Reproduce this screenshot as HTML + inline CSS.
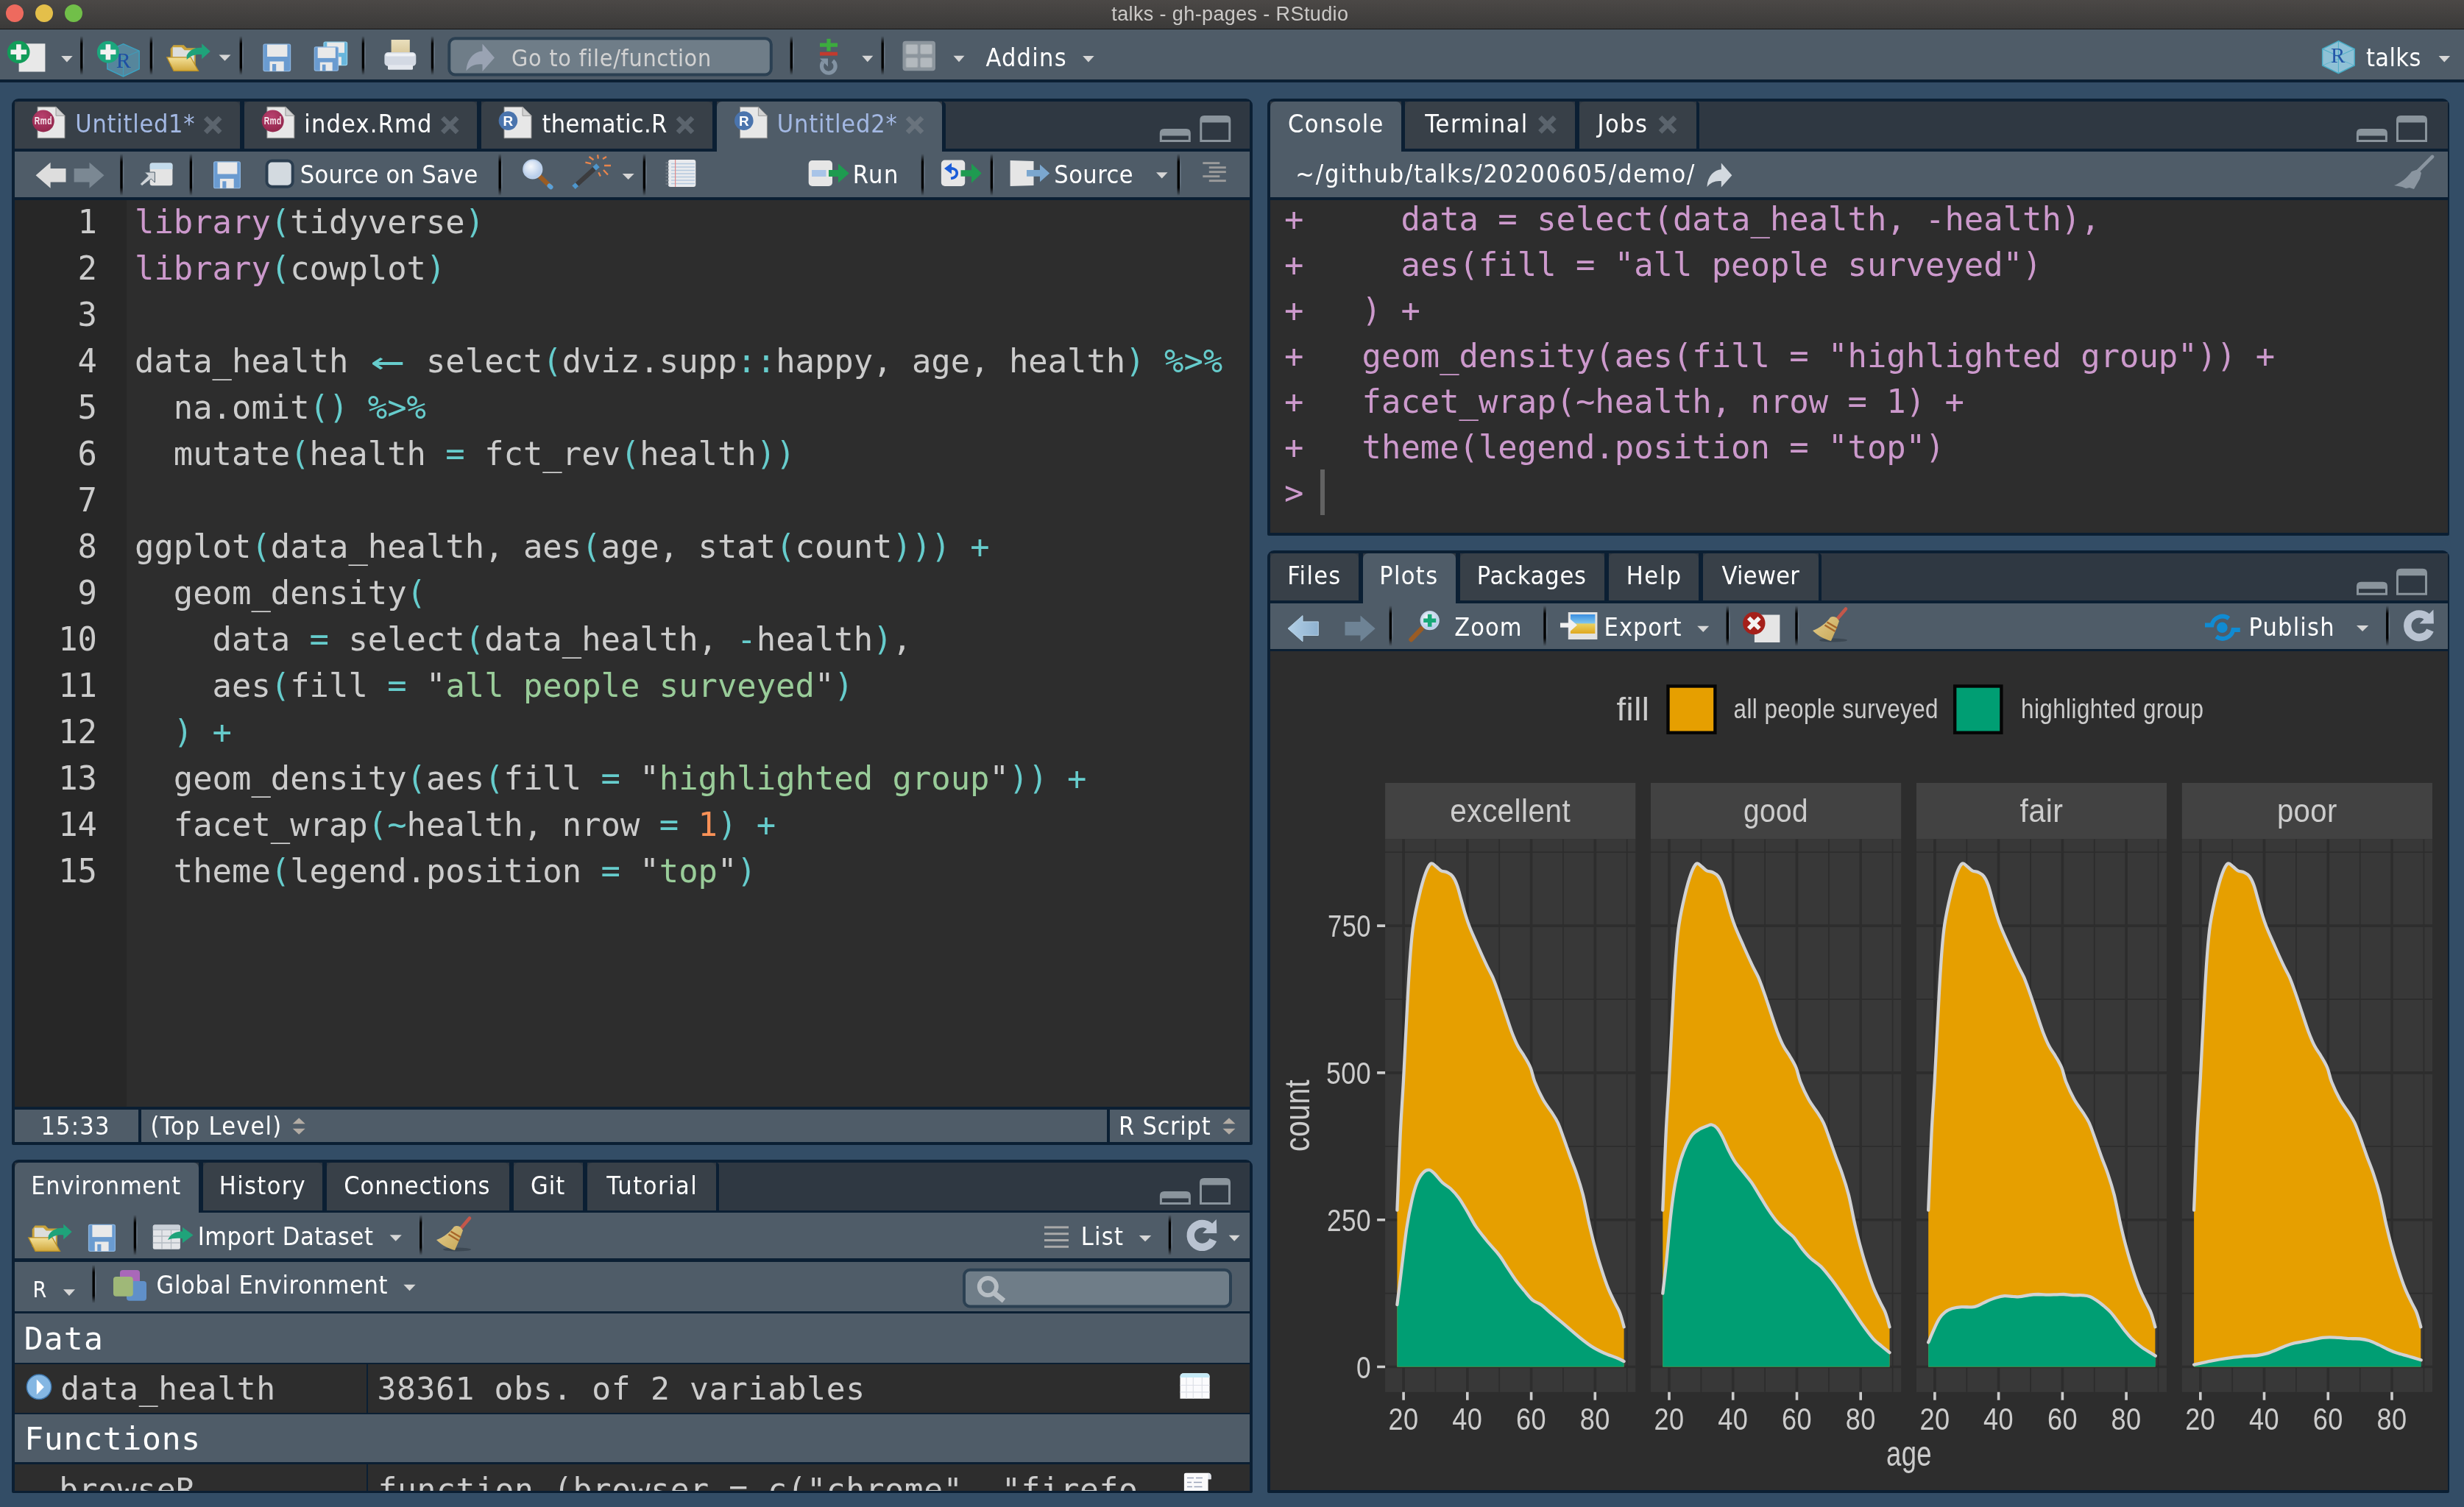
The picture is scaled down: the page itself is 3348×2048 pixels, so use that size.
<!DOCTYPE html>
<html lang="en">
<head>
<meta charset="utf-8">
<title>talks - gh-pages - RStudio</title>
<style>
html,body{margin:0;padding:0;}
body{width:3348px;height:2048px;overflow:hidden;background:#334d66;position:relative;
  font-family:"DejaVu Sans Condensed","Liberation Sans",sans-serif;font-size:34px;letter-spacing:0.5px;color:#fff;}
.a{position:absolute;}
.abs{position:absolute;}
div,span,svg{position:absolute;box-sizing:border-box;}
.code span,.con span,.t span,.ln span{position:static;}
.titlebar{left:0;top:0;width:3348px;height:39px;background:linear-gradient(#4b4846,#3b3a39);}
.titleline{left:0;top:39px;width:3348px;height:1px;background:#151515;}
.title{left:0;top:0;width:3348px;height:39px;line-height:38px;text-align:center;font-family:"Liberation Sans",sans-serif;font-size:26.5px;letter-spacing:0.55px;color:#c9c7c5;}
.tl{top:6px;width:24px;height:24px;border-radius:12px;}
.maintb{left:0;top:40px;width:3348px;height:68px;background:#4f5c68;}
.maintbline{left:0;top:108px;width:3348px;height:4px;background:#0b1f33;}
.pane{background:#0b1f33;border-radius:9px 9px 2px 2px;overflow:hidden;}
.tb{background:#4f5c68;}
.tabrow{background:#2f3842;}
.tab{background:#384048;border-radius:7px 7px 0 0;}
.tab.act{background:#4f5c68;}
.ed{background:#2d2d2d;}
.t{white-space:pre;line-height:40px;height:40px;}
.sep{width:3px;background:linear-gradient(rgba(0,0,0,0),#000 18%,#000 82%,rgba(0,0,0,0));box-shadow:0 0 2px rgba(0,0,0,.35);}
.mono{font-family:"DejaVu Sans Mono","Liberation Mono",monospace;letter-spacing:0;}
.code,.ln,.con{font-family:"DejaVu Sans Mono","Liberation Mono",monospace;font-size:43.85px;letter-spacing:0;white-space:pre;color:#cccccc;}
.code div,.ln div{position:absolute;height:63px;line-height:63px;left:0;}
.ln div{width:100%;text-align:right;}
.con div{position:absolute;height:62px;line-height:62px;left:0;color:#cc99cc;}
.arr{display:inline-block;width:52.8px;text-align:center;transform:scale(1.75,1.15)}
.k{color:#cc99cc}.p{color:#66cccc}.s{color:#99cc99}.n{color:#f99157}
.dd{width:0;height:0;border-left:9px solid transparent;border-right:9px solid transparent;border-top:10px solid #d4d4d4;}
</style>
</head>
<body>
<div id="root" style="left:0;top:0;width:3348px;height:2048px;will-change:transform">
<!-- ===== window title bar ===== -->
<div class="titlebar"></div><div class="titleline"></div>
<div class="tl" style="left:8px;background:#ee6a5e"></div>
<div class="tl" style="left:48px;background:#e4bf4a"></div>
<div class="tl" style="left:88px;background:#71bf49"></div>
<!-- ===== main toolbar ===== -->
<div class="maintb"></div><div class="maintbline"></div>
<!-- ===== source pane ===== -->
<div class="pane" style="left:16px;top:134px;width:1686px;height:1422px;">
  <div class="tabrow" style="left:4px;top:4px;width:1678px;height:64px;"></div>
  <div class="tab" style="left:4px;top:4px;width:306px;height:64px;"></div>
  <div class="tab" style="left:316px;top:4px;width:316px;height:64px;"></div>
  <div class="tab" style="left:638px;top:4px;width:314px;height:64px;"></div>
  <div style="left:310px;top:4px;width:6px;height:64px;background:#0b1f33"></div>
  <div style="left:632px;top:4px;width:6px;height:64px;background:#0b1f33"></div>
  <div style="left:952px;top:4px;width:6px;height:64px;background:#0b1f33"></div>
  <div style="left:1264px;top:4px;width:5px;height:64px;background:#0b1f33;border-radius:0 7px 0 0"></div>
  <!-- toolbar -->
  <div class="tb" style="left:4px;top:72px;width:1678px;height:62px;"></div>
  <div class="tab act" style="left:958px;top:4px;width:306px;height:70px;"></div>
  <!-- editor -->
  <div class="ed" style="left:4px;top:138px;width:1678px;height:1232px;"></div>
  <div style="left:4px;top:138px;width:152px;height:1232px;background:#272727"></div>
  <div class="ln" style="left:4px;top:136.4px;width:112px;height:1000px;">
<div style="top:0px">1</div><div style="top:63px">2</div><div style="top:126px">3</div><div style="top:189px">4</div><div style="top:252px">5</div><div style="top:315px">6</div><div style="top:378px">7</div><div style="top:441px">8</div><div style="top:504px">9</div><div style="top:567px">10</div><div style="top:630px">11</div><div style="top:693px">12</div><div style="top:756px">13</div><div style="top:819px">14</div><div style="top:882px">15</div>
  </div>
  <div class="code" style="left:167px;top:136.4px;width:1500px;height:1000px;">
<div style="top:0px"><span class="k">library</span><span class="p">(</span>tidyverse<span class="p">)</span></div>
<div style="top:63px"><span class="k">library</span><span class="p">(</span>cowplot<span class="p">)</span></div>
<div style="top:189px">data_health <span class="p arr">←</span> select<span class="p">(</span>dviz.supp<span class="p">::</span>happy, age, health<span class="p">)</span> <span class="p">%&gt;%</span></div>
<div style="top:252px">  na.omit<span class="p">()</span> <span class="p">%&gt;%</span></div>
<div style="top:315px">  mutate<span class="p">(</span>health <span class="p">=</span> fct_rev<span class="p">(</span>health<span class="p">))</span></div>
<div style="top:441px">ggplot<span class="p">(</span>data_health, aes<span class="p">(</span>age, stat<span class="p">(</span>count<span class="p">)))</span> <span class="p">+</span></div>
<div style="top:504px">  geom_density<span class="p">(</span></div>
<div style="top:567px">    data <span class="p">=</span> select<span class="p">(</span>data_health, <span class="p">-</span>health<span class="p">)</span>,</div>
<div style="top:630px">    aes<span class="p">(</span>fill <span class="p">=</span> "<span class="s">all people surveyed</span>"<span class="p">)</span></div>
<div style="top:693px">  <span class="p">)</span> <span class="p">+</span></div>
<div style="top:756px">  geom_density<span class="p">(</span>aes<span class="p">(</span>fill <span class="p">=</span> "<span class="s">highlighted group</span>"<span class="p">))</span> <span class="p">+</span></div>
<div style="top:819px">  facet_wrap<span class="p">(~</span>health, nrow <span class="p">=</span> <span class="n">1</span><span class="p">)</span> <span class="p">+</span></div>
<div style="top:882px">  theme<span class="p">(</span>legend.position <span class="p">=</span> "<span class="s">top</span>"<span class="p">)</span></div>
  </div>
  <!-- status bar -->
  <div class="tb" style="left:4px;top:1374px;width:168px;height:44px;"></div>
  <div class="tb" style="left:176px;top:1374px;width:1312px;height:44px;"></div>
  <div class="tb" style="left:1492px;top:1374px;width:190px;height:44px;"></div>
</div>
<!-- ===== console pane ===== -->
<div class="pane" style="left:1722px;top:134px;width:1606px;height:594px;">
  <div class="tabrow" style="left:4px;top:4px;width:1600px;height:64px;"></div>
  <div class="tab" style="left:187px;top:4px;width:231px;height:64px;"></div>
  <div class="tab" style="left:424px;top:4px;width:159px;height:64px;"></div>
  <div style="left:182px;top:4px;width:5px;height:64px;background:#0b1f33"></div>
  <div style="left:418px;top:4px;width:6px;height:64px;background:#0b1f33"></div>
  <div style="left:583px;top:4px;width:4px;height:64px;background:#0b1f33;border-radius:0 7px 0 0"></div>
  <div class="tb" style="left:4px;top:72px;width:1600px;height:62px;"></div>
  <div class="tab act" style="left:4px;top:4px;width:178px;height:70px;"></div>
  <div class="ed" style="left:4px;top:138px;width:1600px;height:452px;"></div>
  <div class="con" style="left:23px;top:132.8px;width:1500px;height:450px;">
<div style="top:0px">+     data = select(data_health, -health),</div>
<div style="top:62px">+     aes(fill = "all people surveyed")</div>
<div style="top:124px">+   ) +</div>
<div style="top:186px">+   geom_density(aes(fill = "highlighted group")) +</div>
<div style="top:248px">+   facet_wrap(~health, nrow = 1) +</div>
<div style="top:310px">+   theme(legend.position = "top")</div>
<div style="top:372px">&gt; </div>
  </div>
  <div style="left:72.2px;top:504px;width:5.4px;height:62px;background:#626262"></div>
</div>
<!-- ===== plots pane ===== -->
<div class="pane" style="left:1722px;top:748px;width:1606px;height:1281px;">
  <div class="tabrow" style="left:4px;top:4px;width:1600px;height:64px;"></div>
  <div class="tab" style="left:4px;top:4px;width:120px;height:64px;"></div>
  <div class="tab" style="left:262px;top:4px;width:196px;height:64px;"></div>
  <div class="tab" style="left:464px;top:4px;width:122px;height:64px;"></div>
  <div class="tab" style="left:592px;top:4px;width:157px;height:64px;"></div>
  <div style="left:124px;top:4px;width:6px;height:64px;background:#0b1f33"></div>
  <div style="left:256px;top:4px;width:6px;height:64px;background:#0b1f33"></div>
  <div style="left:458px;top:4px;width:6px;height:64px;background:#0b1f33"></div>
  <div style="left:586px;top:4px;width:6px;height:64px;background:#0b1f33"></div>
  <div style="left:749px;top:4px;width:4px;height:64px;background:#0b1f33;border-radius:0 7px 0 0"></div>
  <div class="tb" style="left:4px;top:72px;width:1600px;height:61.5px;"></div>
  <div class="tab act" style="left:130px;top:4px;width:126px;height:70px;"></div>
<svg style="left:4px;top:137px" width="1600" height="1140" viewBox="1726 885 1600 1140" font-family="Liberation Sans, sans-serif" fill="#cccccc">
<rect x="1726" y="885" width="1600" height="1140" fill="#2d2d2d"/>
<rect x="1882.1" y="1064.0" width="340.2" height="76.6" fill="#424242"/>
<rect x="1882.1" y="1140.6" width="340.2" height="751.2" fill="#383838"/>
<path d="M1950.4,1140.6V1891.8M2037.2,1140.6V1891.8M2123.9,1140.6V1891.8M2210.7,1140.6V1891.8M1882.1,1757.6H2222.3M1882.1,1557.8H2222.3M1882.1,1358.0H2222.3M1882.1,1158.2H2222.3" stroke="#2d2d2d" stroke-width="1.8" fill="none"/>
<path d="M1907.1,1140.6V1891.8M1993.8,1140.6V1891.8M2080.6,1140.6V1891.8M2167.3,1140.6V1891.8M1882.1,1857.5H2222.3M1882.1,1657.7H2222.3M1882.1,1457.9H2222.3M1882.1,1258.1H2222.3" stroke="#2d2d2d" stroke-width="3.6" fill="none"/>
<path d="M1898.4,1644.7C1899.1,1627.4 1901.3,1570.8 1902.7,1541.3C1904.1,1511.9 1905.3,1498.8 1907.0,1468.1C1908.6,1437.3 1911.1,1385.3 1912.7,1356.8C1914.2,1328.2 1915.1,1313.5 1916.4,1296.8C1917.7,1280.2 1918.4,1270.2 1920.4,1256.9C1922.4,1243.6 1925.6,1228.6 1928.4,1216.9C1931.1,1205.3 1934.3,1194.2 1936.9,1187.0C1939.6,1179.7 1942.0,1175.1 1944.3,1173.6C1946.7,1172.0 1948.9,1175.9 1951.2,1177.6C1953.5,1179.2 1955.8,1181.9 1958.3,1183.3C1960.9,1184.6 1963.8,1184.3 1966.3,1185.5C1968.8,1186.8 1971.2,1187.8 1973.5,1190.7C1975.7,1193.5 1977.7,1197.3 1979.7,1202.7C1981.7,1208.0 1983.5,1215.9 1985.4,1222.6C1987.3,1229.4 1989.2,1237.0 1991.2,1243.2C1993.1,1249.4 1994.0,1252.6 1996.9,1259.7C1999.7,1266.9 2004.5,1277.4 2008.3,1286.0C2012.1,1294.6 2016.4,1304.1 2019.7,1311.1C2023.0,1318.2 2025.4,1321.6 2028.3,1328.2C2031.1,1334.9 2034.0,1343.0 2036.8,1351.1C2039.7,1359.2 2042.5,1368.3 2045.4,1376.8C2048.2,1385.2 2051.1,1394.4 2053.9,1401.9C2056.8,1409.4 2059.6,1416.3 2062.5,1421.8C2065.4,1427.4 2068.2,1430.4 2071.1,1435.3C2073.9,1440.1 2077.2,1445.2 2079.6,1451.0C2082.0,1456.7 2082.5,1462.8 2085.3,1470.0C2088.2,1477.2 2092.9,1487.4 2096.7,1494.3C2100.5,1501.2 2104.8,1506.1 2108.2,1511.4C2111.5,1516.6 2113.9,1519.5 2116.7,1525.7C2119.6,1531.8 2122.4,1540.6 2125.3,1548.5C2128.1,1556.3 2131.0,1564.9 2133.8,1572.7C2136.7,1580.6 2139.6,1587.0 2142.4,1595.6C2145.3,1604.1 2148.1,1612.7 2151.0,1624.1C2153.8,1635.5 2156.7,1651.7 2159.5,1664.1C2162.4,1676.4 2165.2,1687.8 2168.1,1698.3C2170.9,1708.8 2173.8,1718.0 2176.7,1726.8C2179.5,1735.6 2182.4,1744.0 2185.2,1751.1C2188.1,1758.2 2191.2,1764.2 2193.8,1769.7C2196.4,1775.1 2198.8,1778.3 2200.9,1783.9C2203.1,1789.5 2205.7,1800.1 2206.6,1803.3L2206.6,1857.5L1898.4,1857.5Z" fill="#e69f00"/>
<path d="M1898.4,1644.7C1899.1,1627.4 1901.3,1570.8 1902.7,1541.3C1904.1,1511.9 1905.3,1498.8 1907.0,1468.1C1908.6,1437.3 1911.1,1385.3 1912.7,1356.8C1914.2,1328.2 1915.1,1313.5 1916.4,1296.8C1917.7,1280.2 1918.4,1270.2 1920.4,1256.9C1922.4,1243.6 1925.6,1228.6 1928.4,1216.9C1931.1,1205.3 1934.3,1194.2 1936.9,1187.0C1939.6,1179.7 1942.0,1175.1 1944.3,1173.6C1946.7,1172.0 1948.9,1175.9 1951.2,1177.6C1953.5,1179.2 1955.8,1181.9 1958.3,1183.3C1960.9,1184.6 1963.8,1184.3 1966.3,1185.5C1968.8,1186.8 1971.2,1187.8 1973.5,1190.7C1975.7,1193.5 1977.7,1197.3 1979.7,1202.7C1981.7,1208.0 1983.5,1215.9 1985.4,1222.6C1987.3,1229.4 1989.2,1237.0 1991.2,1243.2C1993.1,1249.4 1994.0,1252.6 1996.9,1259.7C1999.7,1266.9 2004.5,1277.4 2008.3,1286.0C2012.1,1294.6 2016.4,1304.1 2019.7,1311.1C2023.0,1318.2 2025.4,1321.6 2028.3,1328.2C2031.1,1334.9 2034.0,1343.0 2036.8,1351.1C2039.7,1359.2 2042.5,1368.3 2045.4,1376.8C2048.2,1385.2 2051.1,1394.4 2053.9,1401.9C2056.8,1409.4 2059.6,1416.3 2062.5,1421.8C2065.4,1427.4 2068.2,1430.4 2071.1,1435.3C2073.9,1440.1 2077.2,1445.2 2079.6,1451.0C2082.0,1456.7 2082.5,1462.8 2085.3,1470.0C2088.2,1477.2 2092.9,1487.4 2096.7,1494.3C2100.5,1501.2 2104.8,1506.1 2108.2,1511.4C2111.5,1516.6 2113.9,1519.5 2116.7,1525.7C2119.6,1531.8 2122.4,1540.6 2125.3,1548.5C2128.1,1556.3 2131.0,1564.9 2133.8,1572.7C2136.7,1580.6 2139.6,1587.0 2142.4,1595.6C2145.3,1604.1 2148.1,1612.7 2151.0,1624.1C2153.8,1635.5 2156.7,1651.7 2159.5,1664.1C2162.4,1676.4 2165.2,1687.8 2168.1,1698.3C2170.9,1708.8 2173.8,1718.0 2176.7,1726.8C2179.5,1735.6 2182.4,1744.0 2185.2,1751.1C2188.1,1758.2 2191.2,1764.2 2193.8,1769.7C2196.4,1775.1 2198.8,1778.3 2200.9,1783.9C2203.1,1789.5 2205.7,1800.1 2206.6,1803.3" fill="none" stroke="#d2d2d2" stroke-width="4.3" stroke-linecap="round" stroke-linejoin="round"/>
<path d="M1898.4,1773.1C1899.4,1765.4 1902.0,1744.1 1904.1,1726.8C1906.2,1709.6 1908.9,1685.7 1911.2,1669.8C1913.6,1653.8 1916.0,1641.7 1918.4,1631.2C1920.8,1620.8 1922.9,1613.3 1925.5,1607.0C1928.1,1600.7 1931.3,1596.1 1934.1,1593.3C1936.8,1590.4 1939.4,1589.5 1942.1,1589.9C1944.7,1590.2 1946.8,1592.7 1949.8,1595.6C1952.7,1598.4 1956.2,1603.7 1959.8,1607.0C1963.3,1610.3 1967.4,1612.0 1971.2,1615.5C1975.0,1619.1 1978.8,1623.2 1982.6,1628.4C1986.4,1633.6 1990.2,1640.5 1994.0,1646.9C1997.8,1653.4 2001.1,1660.5 2005.4,1666.9C2009.7,1673.3 2014.5,1679.0 2019.7,1685.5C2024.9,1691.9 2032.1,1699.3 2036.8,1705.4C2041.6,1711.6 2044.4,1716.9 2048.2,1722.6C2052.0,1728.3 2055.8,1734.5 2059.6,1739.7C2063.4,1744.9 2067.3,1749.4 2071.1,1754.0C2074.9,1758.5 2078.7,1763.6 2082.5,1766.8C2086.3,1770.0 2089.6,1770.0 2093.9,1773.1C2098.2,1776.2 2102.9,1780.9 2108.2,1785.4C2113.4,1789.8 2119.1,1794.4 2125.3,1799.6C2131.5,1804.9 2139.1,1811.8 2145.3,1816.7C2151.4,1821.7 2156.7,1825.9 2162.4,1829.6C2168.1,1833.3 2173.8,1836.1 2179.5,1838.7C2185.2,1841.3 2192.1,1843.4 2196.6,1845.3C2201.1,1847.2 2205.0,1849.3 2206.6,1850.1L2206.6,1857.5L1898.4,1857.5Z" fill="#009e73"/>
<path d="M1898.4,1773.1C1899.4,1765.4 1902.0,1744.1 1904.1,1726.8C1906.2,1709.6 1908.9,1685.7 1911.2,1669.8C1913.6,1653.8 1916.0,1641.7 1918.4,1631.2C1920.8,1620.8 1922.9,1613.3 1925.5,1607.0C1928.1,1600.7 1931.3,1596.1 1934.1,1593.3C1936.8,1590.4 1939.4,1589.5 1942.1,1589.9C1944.7,1590.2 1946.8,1592.7 1949.8,1595.6C1952.7,1598.4 1956.2,1603.7 1959.8,1607.0C1963.3,1610.3 1967.4,1612.0 1971.2,1615.5C1975.0,1619.1 1978.8,1623.2 1982.6,1628.4C1986.4,1633.6 1990.2,1640.5 1994.0,1646.9C1997.8,1653.4 2001.1,1660.5 2005.4,1666.9C2009.7,1673.3 2014.5,1679.0 2019.7,1685.5C2024.9,1691.9 2032.1,1699.3 2036.8,1705.4C2041.6,1711.6 2044.4,1716.9 2048.2,1722.6C2052.0,1728.3 2055.8,1734.5 2059.6,1739.7C2063.4,1744.9 2067.3,1749.4 2071.1,1754.0C2074.9,1758.5 2078.7,1763.6 2082.5,1766.8C2086.3,1770.0 2089.6,1770.0 2093.9,1773.1C2098.2,1776.2 2102.9,1780.9 2108.2,1785.4C2113.4,1789.8 2119.1,1794.4 2125.3,1799.6C2131.5,1804.9 2139.1,1811.8 2145.3,1816.7C2151.4,1821.7 2156.7,1825.9 2162.4,1829.6C2168.1,1833.3 2173.8,1836.1 2179.5,1838.7C2185.2,1841.3 2192.1,1843.4 2196.6,1845.3C2201.1,1847.2 2205.0,1849.3 2206.6,1850.1" fill="none" stroke="#d2d2d2" stroke-width="4.3" stroke-linecap="round" stroke-linejoin="round"/>
<text x="2052.2" y="1117.3" font-size="44" text-anchor="middle" textLength="164" lengthAdjust="spacingAndGlyphs">excellent</text>
<text x="1907.1" y="1943" font-size="43" text-anchor="middle" textLength="41" lengthAdjust="spacingAndGlyphs">20</text>
<text x="1993.8" y="1943" font-size="43" text-anchor="middle" textLength="41" lengthAdjust="spacingAndGlyphs">40</text>
<text x="2080.6" y="1943" font-size="43" text-anchor="middle" textLength="41" lengthAdjust="spacingAndGlyphs">60</text>
<text x="2167.3" y="1943" font-size="43" text-anchor="middle" textLength="41" lengthAdjust="spacingAndGlyphs">80</text>
<path d="M1907.1,1891.8V1902.8M1993.8,1891.8V1902.8M2080.6,1891.8V1902.8M2167.3,1891.8V1902.8" stroke="#cccccc" stroke-width="3.6" fill="none"/>
<rect x="2243.0" y="1064.0" width="340.2" height="76.6" fill="#424242"/>
<rect x="2243.0" y="1140.6" width="340.2" height="751.2" fill="#383838"/>
<path d="M2311.4,1140.6V1891.8M2398.1,1140.6V1891.8M2484.9,1140.6V1891.8M2571.6,1140.6V1891.8M2243.0,1757.6H2583.2M2243.0,1557.8H2583.2M2243.0,1358.0H2583.2M2243.0,1158.2H2583.2" stroke="#2d2d2d" stroke-width="1.8" fill="none"/>
<path d="M2268.0,1140.6V1891.8M2354.7,1140.6V1891.8M2441.5,1140.6V1891.8M2528.2,1140.6V1891.8M2243.0,1857.5H2583.2M2243.0,1657.7H2583.2M2243.0,1457.9H2583.2M2243.0,1258.1H2583.2" stroke="#2d2d2d" stroke-width="3.6" fill="none"/>
<path d="M2259.3,1644.7C2260.0,1627.4 2262.2,1570.8 2263.6,1541.3C2265.0,1511.9 2266.2,1498.8 2267.9,1468.1C2269.5,1437.3 2272.0,1385.3 2273.6,1356.8C2275.1,1328.2 2276.0,1313.5 2277.3,1296.8C2278.6,1280.2 2279.3,1270.2 2281.3,1256.9C2283.3,1243.6 2286.5,1228.6 2289.3,1216.9C2292.0,1205.3 2295.2,1194.2 2297.8,1187.0C2300.5,1179.7 2302.9,1175.1 2305.2,1173.6C2307.6,1172.0 2309.8,1175.9 2312.1,1177.6C2314.4,1179.2 2316.7,1181.9 2319.2,1183.3C2321.8,1184.6 2324.7,1184.3 2327.2,1185.5C2329.7,1186.8 2332.1,1187.8 2334.4,1190.7C2336.6,1193.5 2338.6,1197.3 2340.6,1202.7C2342.6,1208.0 2344.4,1215.9 2346.3,1222.6C2348.2,1229.4 2350.1,1237.0 2352.1,1243.2C2354.0,1249.4 2354.9,1252.6 2357.8,1259.7C2360.6,1266.9 2365.4,1277.4 2369.2,1286.0C2373.0,1294.6 2377.3,1304.1 2380.6,1311.1C2383.9,1318.2 2386.3,1321.6 2389.2,1328.2C2392.0,1334.9 2394.9,1343.0 2397.7,1351.1C2400.6,1359.2 2403.4,1368.3 2406.3,1376.8C2409.1,1385.2 2412.0,1394.4 2414.8,1401.9C2417.7,1409.4 2420.5,1416.3 2423.4,1421.8C2426.3,1427.4 2429.1,1430.4 2432.0,1435.3C2434.8,1440.1 2438.1,1445.2 2440.5,1451.0C2442.9,1456.7 2443.4,1462.8 2446.2,1470.0C2449.1,1477.2 2453.8,1487.4 2457.6,1494.3C2461.4,1501.2 2465.7,1506.1 2469.1,1511.4C2472.4,1516.6 2474.8,1519.5 2477.6,1525.7C2480.5,1531.8 2483.3,1540.6 2486.2,1548.5C2489.0,1556.3 2491.9,1564.9 2494.7,1572.7C2497.6,1580.6 2500.5,1587.0 2503.3,1595.6C2506.2,1604.1 2509.0,1612.7 2511.9,1624.1C2514.7,1635.5 2517.6,1651.7 2520.4,1664.1C2523.3,1676.4 2526.1,1687.8 2529.0,1698.3C2531.8,1708.8 2534.7,1718.0 2537.6,1726.8C2540.4,1735.6 2543.3,1744.0 2546.1,1751.1C2549.0,1758.2 2552.1,1764.2 2554.7,1769.7C2557.3,1775.1 2559.7,1778.3 2561.8,1783.9C2564.0,1789.5 2566.6,1800.1 2567.5,1803.3L2567.5,1857.5L2259.3,1857.5Z" fill="#e69f00"/>
<path d="M2259.3,1644.7C2260.0,1627.4 2262.2,1570.8 2263.6,1541.3C2265.0,1511.9 2266.2,1498.8 2267.9,1468.1C2269.5,1437.3 2272.0,1385.3 2273.6,1356.8C2275.1,1328.2 2276.0,1313.5 2277.3,1296.8C2278.6,1280.2 2279.3,1270.2 2281.3,1256.9C2283.3,1243.6 2286.5,1228.6 2289.3,1216.9C2292.0,1205.3 2295.2,1194.2 2297.8,1187.0C2300.5,1179.7 2302.9,1175.1 2305.2,1173.6C2307.6,1172.0 2309.8,1175.9 2312.1,1177.6C2314.4,1179.2 2316.7,1181.9 2319.2,1183.3C2321.8,1184.6 2324.7,1184.3 2327.2,1185.5C2329.7,1186.8 2332.1,1187.8 2334.4,1190.7C2336.6,1193.5 2338.6,1197.3 2340.6,1202.7C2342.6,1208.0 2344.4,1215.9 2346.3,1222.6C2348.2,1229.4 2350.1,1237.0 2352.1,1243.2C2354.0,1249.4 2354.9,1252.6 2357.8,1259.7C2360.6,1266.9 2365.4,1277.4 2369.2,1286.0C2373.0,1294.6 2377.3,1304.1 2380.6,1311.1C2383.9,1318.2 2386.3,1321.6 2389.2,1328.2C2392.0,1334.9 2394.9,1343.0 2397.7,1351.1C2400.6,1359.2 2403.4,1368.3 2406.3,1376.8C2409.1,1385.2 2412.0,1394.4 2414.8,1401.9C2417.7,1409.4 2420.5,1416.3 2423.4,1421.8C2426.3,1427.4 2429.1,1430.4 2432.0,1435.3C2434.8,1440.1 2438.1,1445.2 2440.5,1451.0C2442.9,1456.7 2443.4,1462.8 2446.2,1470.0C2449.1,1477.2 2453.8,1487.4 2457.6,1494.3C2461.4,1501.2 2465.7,1506.1 2469.1,1511.4C2472.4,1516.6 2474.8,1519.5 2477.6,1525.7C2480.5,1531.8 2483.3,1540.6 2486.2,1548.5C2489.0,1556.3 2491.9,1564.9 2494.7,1572.7C2497.6,1580.6 2500.5,1587.0 2503.3,1595.6C2506.2,1604.1 2509.0,1612.7 2511.9,1624.1C2514.7,1635.5 2517.6,1651.7 2520.4,1664.1C2523.3,1676.4 2526.1,1687.8 2529.0,1698.3C2531.8,1708.8 2534.7,1718.0 2537.6,1726.8C2540.4,1735.6 2543.3,1744.0 2546.1,1751.1C2549.0,1758.2 2552.1,1764.2 2554.7,1769.7C2557.3,1775.1 2559.7,1778.3 2561.8,1783.9C2564.0,1789.5 2566.6,1800.1 2567.5,1803.3" fill="none" stroke="#d2d2d2" stroke-width="4.3" stroke-linecap="round" stroke-linejoin="round"/>
<path d="M2259.3,1757.7C2260.2,1750.2 2262.6,1730.1 2264.4,1712.6C2266.2,1695.1 2268.2,1669.8 2270.1,1652.6C2272.0,1635.5 2273.7,1622.2 2275.9,1609.8C2278.0,1597.5 2280.4,1587.5 2283.0,1578.4C2285.6,1569.4 2288.7,1561.8 2291.5,1555.6C2294.4,1549.4 2297.0,1544.9 2300.1,1541.3C2303.2,1537.8 2306.8,1536.1 2310.1,1534.2C2313.4,1532.3 2317.5,1530.9 2320.1,1529.9C2322.7,1529.0 2323.7,1528.0 2325.8,1528.5C2327.9,1529.0 2330.6,1530.2 2332.9,1532.8C2335.3,1535.4 2337.4,1539.2 2340.1,1544.2C2342.7,1549.2 2345.8,1557.0 2348.6,1562.8C2351.5,1568.5 2353.9,1573.5 2357.2,1578.4C2360.5,1583.4 2364.8,1588.0 2368.6,1592.7C2372.4,1597.5 2376.2,1601.5 2380.0,1607.0C2383.8,1612.5 2387.6,1619.4 2391.4,1625.5C2395.2,1631.7 2399.0,1638.4 2402.9,1644.1C2406.7,1649.8 2410.5,1655.3 2414.3,1659.8C2418.1,1664.3 2421.9,1667.6 2425.7,1671.2C2429.5,1674.8 2433.3,1676.9 2437.1,1681.2C2440.9,1685.5 2444.7,1692.1 2448.5,1696.9C2452.3,1701.6 2455.6,1705.7 2459.9,1709.7C2464.2,1713.8 2469.4,1716.4 2474.2,1721.1C2479.0,1725.9 2483.7,1732.1 2488.5,1738.3C2493.2,1744.4 2498.0,1751.3 2502.7,1758.2C2507.5,1765.1 2512.2,1772.5 2517.0,1779.6C2521.8,1786.8 2526.5,1794.4 2531.3,1801.1C2536.0,1807.7 2541.3,1814.8 2545.5,1819.6C2549.8,1824.4 2553.3,1826.5 2557.0,1829.6C2560.6,1832.7 2565.8,1836.7 2567.5,1838.2L2567.5,1857.5L2259.3,1857.5Z" fill="#009e73"/>
<path d="M2259.3,1757.7C2260.2,1750.2 2262.6,1730.1 2264.4,1712.6C2266.2,1695.1 2268.2,1669.8 2270.1,1652.6C2272.0,1635.5 2273.7,1622.2 2275.9,1609.8C2278.0,1597.5 2280.4,1587.5 2283.0,1578.4C2285.6,1569.4 2288.7,1561.8 2291.5,1555.6C2294.4,1549.4 2297.0,1544.9 2300.1,1541.3C2303.2,1537.8 2306.8,1536.1 2310.1,1534.2C2313.4,1532.3 2317.5,1530.9 2320.1,1529.9C2322.7,1529.0 2323.7,1528.0 2325.8,1528.5C2327.9,1529.0 2330.6,1530.2 2332.9,1532.8C2335.3,1535.4 2337.4,1539.2 2340.1,1544.2C2342.7,1549.2 2345.8,1557.0 2348.6,1562.8C2351.5,1568.5 2353.9,1573.5 2357.2,1578.4C2360.5,1583.4 2364.8,1588.0 2368.6,1592.7C2372.4,1597.5 2376.2,1601.5 2380.0,1607.0C2383.8,1612.5 2387.6,1619.4 2391.4,1625.5C2395.2,1631.7 2399.0,1638.4 2402.9,1644.1C2406.7,1649.8 2410.5,1655.3 2414.3,1659.8C2418.1,1664.3 2421.9,1667.6 2425.7,1671.2C2429.5,1674.8 2433.3,1676.9 2437.1,1681.2C2440.9,1685.5 2444.7,1692.1 2448.5,1696.9C2452.3,1701.6 2455.6,1705.7 2459.9,1709.7C2464.2,1713.8 2469.4,1716.4 2474.2,1721.1C2479.0,1725.9 2483.7,1732.1 2488.5,1738.3C2493.2,1744.4 2498.0,1751.3 2502.7,1758.2C2507.5,1765.1 2512.2,1772.5 2517.0,1779.6C2521.8,1786.8 2526.5,1794.4 2531.3,1801.1C2536.0,1807.7 2541.3,1814.8 2545.5,1819.6C2549.8,1824.4 2553.3,1826.5 2557.0,1829.6C2560.6,1832.7 2565.8,1836.7 2567.5,1838.2" fill="none" stroke="#d2d2d2" stroke-width="4.3" stroke-linecap="round" stroke-linejoin="round"/>
<text x="2413.1" y="1117.3" font-size="44" text-anchor="middle" textLength="88" lengthAdjust="spacingAndGlyphs">good</text>
<text x="2268.0" y="1943" font-size="43" text-anchor="middle" textLength="41" lengthAdjust="spacingAndGlyphs">20</text>
<text x="2354.7" y="1943" font-size="43" text-anchor="middle" textLength="41" lengthAdjust="spacingAndGlyphs">40</text>
<text x="2441.5" y="1943" font-size="43" text-anchor="middle" textLength="41" lengthAdjust="spacingAndGlyphs">60</text>
<text x="2528.2" y="1943" font-size="43" text-anchor="middle" textLength="41" lengthAdjust="spacingAndGlyphs">80</text>
<path d="M2268.0,1891.8V1902.8M2354.7,1891.8V1902.8M2441.5,1891.8V1902.8M2528.2,1891.8V1902.8" stroke="#cccccc" stroke-width="3.6" fill="none"/>
<rect x="2603.9" y="1064.0" width="340.2" height="76.6" fill="#424242"/>
<rect x="2603.9" y="1140.6" width="340.2" height="751.2" fill="#383838"/>
<path d="M2672.3,1140.6V1891.8M2759.0,1140.6V1891.8M2845.8,1140.6V1891.8M2932.5,1140.6V1891.8M2603.9,1757.6H2944.1M2603.9,1557.8H2944.1M2603.9,1358.0H2944.1M2603.9,1158.2H2944.1" stroke="#2d2d2d" stroke-width="1.8" fill="none"/>
<path d="M2628.9,1140.6V1891.8M2715.6,1140.6V1891.8M2802.4,1140.6V1891.8M2889.1,1140.6V1891.8M2603.9,1857.5H2944.1M2603.9,1657.7H2944.1M2603.9,1457.9H2944.1M2603.9,1258.1H2944.1" stroke="#2d2d2d" stroke-width="3.6" fill="none"/>
<path d="M2620.2,1644.7C2620.9,1627.4 2623.1,1570.8 2624.5,1541.3C2625.9,1511.9 2627.1,1498.8 2628.8,1468.1C2630.4,1437.3 2632.9,1385.3 2634.5,1356.8C2636.0,1328.2 2636.9,1313.5 2638.2,1296.8C2639.5,1280.2 2640.2,1270.2 2642.2,1256.9C2644.2,1243.6 2647.4,1228.6 2650.2,1216.9C2652.9,1205.3 2656.1,1194.2 2658.7,1187.0C2661.4,1179.7 2663.8,1175.1 2666.1,1173.6C2668.5,1172.0 2670.7,1175.9 2673.0,1177.6C2675.3,1179.2 2677.6,1181.9 2680.1,1183.3C2682.7,1184.6 2685.6,1184.3 2688.1,1185.5C2690.6,1186.8 2693.0,1187.8 2695.3,1190.7C2697.5,1193.5 2699.5,1197.3 2701.5,1202.7C2703.5,1208.0 2705.3,1215.9 2707.2,1222.6C2709.1,1229.4 2711.0,1237.0 2713.0,1243.2C2714.9,1249.4 2715.8,1252.6 2718.7,1259.7C2721.5,1266.9 2726.3,1277.4 2730.1,1286.0C2733.9,1294.6 2738.2,1304.1 2741.5,1311.1C2744.8,1318.2 2747.2,1321.6 2750.1,1328.2C2752.9,1334.9 2755.8,1343.0 2758.6,1351.1C2761.5,1359.2 2764.3,1368.3 2767.2,1376.8C2770.0,1385.2 2772.9,1394.4 2775.7,1401.9C2778.6,1409.4 2781.4,1416.3 2784.3,1421.8C2787.2,1427.4 2790.0,1430.4 2792.9,1435.3C2795.7,1440.1 2799.0,1445.2 2801.4,1451.0C2803.8,1456.7 2804.3,1462.8 2807.1,1470.0C2810.0,1477.2 2814.7,1487.4 2818.5,1494.3C2822.3,1501.2 2826.6,1506.1 2830.0,1511.4C2833.3,1516.6 2835.7,1519.5 2838.5,1525.7C2841.4,1531.8 2844.2,1540.6 2847.1,1548.5C2849.9,1556.3 2852.8,1564.9 2855.6,1572.7C2858.5,1580.6 2861.4,1587.0 2864.2,1595.6C2867.1,1604.1 2869.9,1612.7 2872.8,1624.1C2875.6,1635.5 2878.5,1651.7 2881.3,1664.1C2884.2,1676.4 2887.0,1687.8 2889.9,1698.3C2892.7,1708.8 2895.6,1718.0 2898.5,1726.8C2901.3,1735.6 2904.2,1744.0 2907.0,1751.1C2909.9,1758.2 2913.0,1764.2 2915.6,1769.7C2918.2,1775.1 2920.6,1778.3 2922.7,1783.9C2924.9,1789.5 2927.5,1800.1 2928.4,1803.3L2928.4,1857.5L2620.2,1857.5Z" fill="#e69f00"/>
<path d="M2620.2,1644.7C2620.9,1627.4 2623.1,1570.8 2624.5,1541.3C2625.9,1511.9 2627.1,1498.8 2628.8,1468.1C2630.4,1437.3 2632.9,1385.3 2634.5,1356.8C2636.0,1328.2 2636.9,1313.5 2638.2,1296.8C2639.5,1280.2 2640.2,1270.2 2642.2,1256.9C2644.2,1243.6 2647.4,1228.6 2650.2,1216.9C2652.9,1205.3 2656.1,1194.2 2658.7,1187.0C2661.4,1179.7 2663.8,1175.1 2666.1,1173.6C2668.5,1172.0 2670.7,1175.9 2673.0,1177.6C2675.3,1179.2 2677.6,1181.9 2680.1,1183.3C2682.7,1184.6 2685.6,1184.3 2688.1,1185.5C2690.6,1186.8 2693.0,1187.8 2695.3,1190.7C2697.5,1193.5 2699.5,1197.3 2701.5,1202.7C2703.5,1208.0 2705.3,1215.9 2707.2,1222.6C2709.1,1229.4 2711.0,1237.0 2713.0,1243.2C2714.9,1249.4 2715.8,1252.6 2718.7,1259.7C2721.5,1266.9 2726.3,1277.4 2730.1,1286.0C2733.9,1294.6 2738.2,1304.1 2741.5,1311.1C2744.8,1318.2 2747.2,1321.6 2750.1,1328.2C2752.9,1334.9 2755.8,1343.0 2758.6,1351.1C2761.5,1359.2 2764.3,1368.3 2767.2,1376.8C2770.0,1385.2 2772.9,1394.4 2775.7,1401.9C2778.6,1409.4 2781.4,1416.3 2784.3,1421.8C2787.2,1427.4 2790.0,1430.4 2792.9,1435.3C2795.7,1440.1 2799.0,1445.2 2801.4,1451.0C2803.8,1456.7 2804.3,1462.8 2807.1,1470.0C2810.0,1477.2 2814.7,1487.4 2818.5,1494.3C2822.3,1501.2 2826.6,1506.1 2830.0,1511.4C2833.3,1516.6 2835.7,1519.5 2838.5,1525.7C2841.4,1531.8 2844.2,1540.6 2847.1,1548.5C2849.9,1556.3 2852.8,1564.9 2855.6,1572.7C2858.5,1580.6 2861.4,1587.0 2864.2,1595.6C2867.1,1604.1 2869.9,1612.7 2872.8,1624.1C2875.6,1635.5 2878.5,1651.7 2881.3,1664.1C2884.2,1676.4 2887.0,1687.8 2889.9,1698.3C2892.7,1708.8 2895.6,1718.0 2898.5,1726.8C2901.3,1735.6 2904.2,1744.0 2907.0,1751.1C2909.9,1758.2 2913.0,1764.2 2915.6,1769.7C2918.2,1775.1 2920.6,1778.3 2922.7,1783.9C2924.9,1789.5 2927.5,1800.1 2928.4,1803.3" fill="none" stroke="#d2d2d2" stroke-width="4.3" stroke-linecap="round" stroke-linejoin="round"/>
<path d="M2620.2,1824.2C2621.4,1821.5 2624.7,1813.2 2627.2,1807.8C2629.6,1802.4 2632.4,1796.1 2635.1,1791.9C2637.7,1787.8 2640.1,1785.4 2643.0,1783.1C2645.9,1780.8 2648.8,1779.5 2652.5,1778.3C2656.2,1777.2 2660.7,1776.4 2665.2,1776.1C2669.6,1775.8 2675.7,1776.7 2679.4,1776.4C2683.1,1776.2 2683.9,1775.9 2687.3,1774.5C2690.7,1773.2 2695.8,1770.1 2700.0,1768.2C2704.2,1766.4 2708.7,1764.6 2712.6,1763.5C2716.6,1762.3 2720.0,1761.5 2723.7,1761.2C2727.4,1761.0 2731.4,1761.7 2734.8,1761.9C2738.2,1762.0 2740.6,1762.5 2744.3,1762.2C2748.0,1761.9 2752.7,1760.5 2757.0,1760.0C2761.2,1759.4 2765.4,1759.1 2769.6,1759.0C2773.8,1759.0 2778.1,1759.6 2782.3,1759.7C2786.5,1759.7 2791.2,1759.4 2794.9,1759.3C2798.6,1759.2 2800.7,1758.9 2804.4,1759.0C2808.1,1759.2 2812.9,1760.1 2817.1,1760.3C2821.3,1760.5 2826.1,1760.0 2829.8,1760.3C2833.5,1760.6 2836.1,1760.7 2839.3,1761.9C2842.4,1763.0 2845.6,1765.1 2848.8,1767.3C2851.9,1769.4 2855.1,1771.9 2858.3,1774.5C2861.4,1777.2 2864.6,1779.7 2867.7,1783.1C2870.9,1786.5 2874.1,1791.0 2877.2,1795.1C2880.4,1799.2 2883.6,1803.8 2886.7,1807.8C2889.9,1811.7 2892.5,1815.2 2896.2,1818.9C2899.9,1822.5 2904.7,1826.7 2908.9,1829.9C2913.1,1833.2 2918.2,1836.1 2921.6,1838.2C2924.9,1840.3 2927.6,1841.9 2928.8,1842.6L2928.8,1857.5L2620.2,1857.5Z" fill="#009e73"/>
<path d="M2620.2,1824.2C2621.4,1821.5 2624.7,1813.2 2627.2,1807.8C2629.6,1802.4 2632.4,1796.1 2635.1,1791.9C2637.7,1787.8 2640.1,1785.4 2643.0,1783.1C2645.9,1780.8 2648.8,1779.5 2652.5,1778.3C2656.2,1777.2 2660.7,1776.4 2665.2,1776.1C2669.6,1775.8 2675.7,1776.7 2679.4,1776.4C2683.1,1776.2 2683.9,1775.9 2687.3,1774.5C2690.7,1773.2 2695.8,1770.1 2700.0,1768.2C2704.2,1766.4 2708.7,1764.6 2712.6,1763.5C2716.6,1762.3 2720.0,1761.5 2723.7,1761.2C2727.4,1761.0 2731.4,1761.7 2734.8,1761.9C2738.2,1762.0 2740.6,1762.5 2744.3,1762.2C2748.0,1761.9 2752.7,1760.5 2757.0,1760.0C2761.2,1759.4 2765.4,1759.1 2769.6,1759.0C2773.8,1759.0 2778.1,1759.6 2782.3,1759.7C2786.5,1759.7 2791.2,1759.4 2794.9,1759.3C2798.6,1759.2 2800.7,1758.9 2804.4,1759.0C2808.1,1759.2 2812.9,1760.1 2817.1,1760.3C2821.3,1760.5 2826.1,1760.0 2829.8,1760.3C2833.5,1760.6 2836.1,1760.7 2839.3,1761.9C2842.4,1763.0 2845.6,1765.1 2848.8,1767.3C2851.9,1769.4 2855.1,1771.9 2858.3,1774.5C2861.4,1777.2 2864.6,1779.7 2867.7,1783.1C2870.9,1786.5 2874.1,1791.0 2877.2,1795.1C2880.4,1799.2 2883.6,1803.8 2886.7,1807.8C2889.9,1811.7 2892.5,1815.2 2896.2,1818.9C2899.9,1822.5 2904.7,1826.7 2908.9,1829.9C2913.1,1833.2 2918.2,1836.1 2921.6,1838.2C2924.9,1840.3 2927.6,1841.9 2928.8,1842.6" fill="none" stroke="#d2d2d2" stroke-width="4.3" stroke-linecap="round" stroke-linejoin="round"/>
<text x="2774.0" y="1117.3" font-size="44" text-anchor="middle" textLength="59" lengthAdjust="spacingAndGlyphs">fair</text>
<text x="2628.9" y="1943" font-size="43" text-anchor="middle" textLength="41" lengthAdjust="spacingAndGlyphs">20</text>
<text x="2715.6" y="1943" font-size="43" text-anchor="middle" textLength="41" lengthAdjust="spacingAndGlyphs">40</text>
<text x="2802.4" y="1943" font-size="43" text-anchor="middle" textLength="41" lengthAdjust="spacingAndGlyphs">60</text>
<text x="2889.1" y="1943" font-size="43" text-anchor="middle" textLength="41" lengthAdjust="spacingAndGlyphs">80</text>
<path d="M2628.9,1891.8V1902.8M2715.6,1891.8V1902.8M2802.4,1891.8V1902.8M2889.1,1891.8V1902.8" stroke="#cccccc" stroke-width="3.6" fill="none"/>
<rect x="2964.8" y="1064.0" width="340.2" height="76.6" fill="#424242"/>
<rect x="2964.8" y="1140.6" width="340.2" height="751.2" fill="#383838"/>
<path d="M3033.2,1140.6V1891.8M3119.9,1140.6V1891.8M3206.7,1140.6V1891.8M3293.4,1140.6V1891.8M2964.8,1757.6H3305.0M2964.8,1557.8H3305.0M2964.8,1358.0H3305.0M2964.8,1158.2H3305.0" stroke="#2d2d2d" stroke-width="1.8" fill="none"/>
<path d="M2989.8,1140.6V1891.8M3076.5,1140.6V1891.8M3163.3,1140.6V1891.8M3250.0,1140.6V1891.8M2964.8,1857.5H3305.0M2964.8,1657.7H3305.0M2964.8,1457.9H3305.0M2964.8,1258.1H3305.0" stroke="#2d2d2d" stroke-width="3.6" fill="none"/>
<path d="M2981.1,1644.7C2981.8,1627.4 2984.0,1570.8 2985.4,1541.3C2986.8,1511.9 2988.0,1498.8 2989.7,1468.1C2991.3,1437.3 2993.8,1385.3 2995.4,1356.8C2996.9,1328.2 2997.8,1313.5 2999.1,1296.8C3000.4,1280.2 3001.1,1270.2 3003.1,1256.9C3005.1,1243.6 3008.3,1228.6 3011.1,1216.9C3013.8,1205.3 3017.0,1194.2 3019.6,1187.0C3022.3,1179.7 3024.7,1175.1 3027.0,1173.6C3029.4,1172.0 3031.6,1175.9 3033.9,1177.6C3036.2,1179.2 3038.5,1181.9 3041.0,1183.3C3043.6,1184.6 3046.5,1184.3 3049.0,1185.5C3051.5,1186.8 3053.9,1187.8 3056.2,1190.7C3058.4,1193.5 3060.4,1197.3 3062.4,1202.7C3064.4,1208.0 3066.2,1215.9 3068.1,1222.6C3070.0,1229.4 3071.9,1237.0 3073.9,1243.2C3075.8,1249.4 3076.7,1252.6 3079.6,1259.7C3082.4,1266.9 3087.2,1277.4 3091.0,1286.0C3094.8,1294.6 3099.1,1304.1 3102.4,1311.1C3105.7,1318.2 3108.1,1321.6 3111.0,1328.2C3113.8,1334.9 3116.7,1343.0 3119.5,1351.1C3122.4,1359.2 3125.2,1368.3 3128.1,1376.8C3130.9,1385.2 3133.8,1394.4 3136.6,1401.9C3139.5,1409.4 3142.3,1416.3 3145.2,1421.8C3148.1,1427.4 3150.9,1430.4 3153.8,1435.3C3156.6,1440.1 3159.9,1445.2 3162.3,1451.0C3164.7,1456.7 3165.2,1462.8 3168.0,1470.0C3170.9,1477.2 3175.6,1487.4 3179.4,1494.3C3183.2,1501.2 3187.5,1506.1 3190.9,1511.4C3194.2,1516.6 3196.6,1519.5 3199.4,1525.7C3202.3,1531.8 3205.1,1540.6 3208.0,1548.5C3210.8,1556.3 3213.7,1564.9 3216.5,1572.7C3219.4,1580.6 3222.3,1587.0 3225.1,1595.6C3228.0,1604.1 3230.8,1612.7 3233.7,1624.1C3236.5,1635.5 3239.4,1651.7 3242.2,1664.1C3245.1,1676.4 3247.9,1687.8 3250.8,1698.3C3253.6,1708.8 3256.5,1718.0 3259.4,1726.8C3262.2,1735.6 3265.1,1744.0 3267.9,1751.1C3270.8,1758.2 3273.9,1764.2 3276.5,1769.7C3279.1,1775.1 3281.5,1778.3 3283.6,1783.9C3285.8,1789.5 3288.4,1800.1 3289.3,1803.3L3289.3,1857.5L2981.1,1857.5Z" fill="#e69f00"/>
<path d="M2981.1,1644.7C2981.8,1627.4 2984.0,1570.8 2985.4,1541.3C2986.8,1511.9 2988.0,1498.8 2989.7,1468.1C2991.3,1437.3 2993.8,1385.3 2995.4,1356.8C2996.9,1328.2 2997.8,1313.5 2999.1,1296.8C3000.4,1280.2 3001.1,1270.2 3003.1,1256.9C3005.1,1243.6 3008.3,1228.6 3011.1,1216.9C3013.8,1205.3 3017.0,1194.2 3019.6,1187.0C3022.3,1179.7 3024.7,1175.1 3027.0,1173.6C3029.4,1172.0 3031.6,1175.9 3033.9,1177.6C3036.2,1179.2 3038.5,1181.9 3041.0,1183.3C3043.6,1184.6 3046.5,1184.3 3049.0,1185.5C3051.5,1186.8 3053.9,1187.8 3056.2,1190.7C3058.4,1193.5 3060.4,1197.3 3062.4,1202.7C3064.4,1208.0 3066.2,1215.9 3068.1,1222.6C3070.0,1229.4 3071.9,1237.0 3073.9,1243.2C3075.8,1249.4 3076.7,1252.6 3079.6,1259.7C3082.4,1266.9 3087.2,1277.4 3091.0,1286.0C3094.8,1294.6 3099.1,1304.1 3102.4,1311.1C3105.7,1318.2 3108.1,1321.6 3111.0,1328.2C3113.8,1334.9 3116.7,1343.0 3119.5,1351.1C3122.4,1359.2 3125.2,1368.3 3128.1,1376.8C3130.9,1385.2 3133.8,1394.4 3136.6,1401.9C3139.5,1409.4 3142.3,1416.3 3145.2,1421.8C3148.1,1427.4 3150.9,1430.4 3153.8,1435.3C3156.6,1440.1 3159.9,1445.2 3162.3,1451.0C3164.7,1456.7 3165.2,1462.8 3168.0,1470.0C3170.9,1477.2 3175.6,1487.4 3179.4,1494.3C3183.2,1501.2 3187.5,1506.1 3190.9,1511.4C3194.2,1516.6 3196.6,1519.5 3199.4,1525.7C3202.3,1531.8 3205.1,1540.6 3208.0,1548.5C3210.8,1556.3 3213.7,1564.9 3216.5,1572.7C3219.4,1580.6 3222.3,1587.0 3225.1,1595.6C3228.0,1604.1 3230.8,1612.7 3233.7,1624.1C3236.5,1635.5 3239.4,1651.7 3242.2,1664.1C3245.1,1676.4 3247.9,1687.8 3250.8,1698.3C3253.6,1708.8 3256.5,1718.0 3259.4,1726.8C3262.2,1735.6 3265.1,1744.0 3267.9,1751.1C3270.8,1758.2 3273.9,1764.2 3276.5,1769.7C3279.1,1775.1 3281.5,1778.3 3283.6,1783.9C3285.8,1789.5 3288.4,1800.1 3289.3,1803.3" fill="none" stroke="#d2d2d2" stroke-width="4.3" stroke-linecap="round" stroke-linejoin="round"/>
<path d="M2981.1,1854.6C2984.9,1853.8 2996.4,1851.0 3003.9,1849.6C3011.4,1848.1 3018.7,1846.8 3026.1,1845.8C3033.4,1844.7 3041.4,1843.9 3048.2,1843.2C3055.1,1842.6 3061.9,1842.6 3067.2,1842.0C3072.5,1841.3 3075.6,1840.6 3079.9,1839.4C3084.1,1838.2 3088.3,1836.4 3092.5,1834.7C3096.7,1833.0 3101.0,1830.9 3105.2,1829.3C3109.4,1827.7 3113.6,1826.2 3117.9,1825.2C3122.1,1824.1 3126.3,1823.8 3130.5,1823.0C3134.7,1822.2 3139.0,1821.3 3143.2,1820.4C3147.4,1819.6 3152.1,1818.4 3155.8,1817.9C3159.5,1817.4 3161.6,1817.3 3165.3,1817.3C3169.0,1817.3 3173.2,1817.6 3178.0,1817.9C3182.7,1818.2 3189.1,1818.9 3193.8,1819.2C3198.6,1819.4 3202.3,1819.0 3206.5,1819.5C3210.7,1820.0 3214.9,1820.7 3219.2,1822.0C3223.4,1823.3 3227.6,1825.4 3231.8,1827.4C3236.0,1829.4 3240.3,1831.8 3244.5,1833.7C3248.7,1835.6 3252.4,1837.2 3257.1,1838.8C3261.9,1840.4 3267.5,1841.6 3273.0,1843.2C3278.4,1844.8 3286.9,1847.4 3289.7,1848.3L3289.7,1857.5L2981.1,1857.5Z" fill="#009e73"/>
<path d="M2981.1,1854.6C2984.9,1853.8 2996.4,1851.0 3003.9,1849.6C3011.4,1848.1 3018.7,1846.8 3026.1,1845.8C3033.4,1844.7 3041.4,1843.9 3048.2,1843.2C3055.1,1842.6 3061.9,1842.6 3067.2,1842.0C3072.5,1841.3 3075.6,1840.6 3079.9,1839.4C3084.1,1838.2 3088.3,1836.4 3092.5,1834.7C3096.7,1833.0 3101.0,1830.9 3105.2,1829.3C3109.4,1827.7 3113.6,1826.2 3117.9,1825.2C3122.1,1824.1 3126.3,1823.8 3130.5,1823.0C3134.7,1822.2 3139.0,1821.3 3143.2,1820.4C3147.4,1819.6 3152.1,1818.4 3155.8,1817.9C3159.5,1817.4 3161.6,1817.3 3165.3,1817.3C3169.0,1817.3 3173.2,1817.6 3178.0,1817.9C3182.7,1818.2 3189.1,1818.9 3193.8,1819.2C3198.6,1819.4 3202.3,1819.0 3206.5,1819.5C3210.7,1820.0 3214.9,1820.7 3219.2,1822.0C3223.4,1823.3 3227.6,1825.4 3231.8,1827.4C3236.0,1829.4 3240.3,1831.8 3244.5,1833.7C3248.7,1835.6 3252.4,1837.2 3257.1,1838.8C3261.9,1840.4 3267.5,1841.6 3273.0,1843.2C3278.4,1844.8 3286.9,1847.4 3289.7,1848.3" fill="none" stroke="#d2d2d2" stroke-width="4.3" stroke-linecap="round" stroke-linejoin="round"/>
<text x="3134.9" y="1117.3" font-size="44" text-anchor="middle" textLength="82" lengthAdjust="spacingAndGlyphs">poor</text>
<text x="2989.8" y="1943" font-size="43" text-anchor="middle" textLength="41" lengthAdjust="spacingAndGlyphs">20</text>
<text x="3076.5" y="1943" font-size="43" text-anchor="middle" textLength="41" lengthAdjust="spacingAndGlyphs">40</text>
<text x="3163.3" y="1943" font-size="43" text-anchor="middle" textLength="41" lengthAdjust="spacingAndGlyphs">60</text>
<text x="3250.0" y="1943" font-size="43" text-anchor="middle" textLength="41" lengthAdjust="spacingAndGlyphs">80</text>
<path d="M2989.8,1891.8V1902.8M3076.5,1891.8V1902.8M3163.3,1891.8V1902.8M3250.0,1891.8V1902.8" stroke="#cccccc" stroke-width="3.6" fill="none"/>
<text x="1863.0" y="1872.5" font-size="43" text-anchor="end" textLength="20" lengthAdjust="spacingAndGlyphs">0</text>
<text x="1863.0" y="1672.7" font-size="43" text-anchor="end" textLength="60" lengthAdjust="spacingAndGlyphs">250</text>
<text x="1863.0" y="1472.9" font-size="43" text-anchor="end" textLength="61" lengthAdjust="spacingAndGlyphs">500</text>
<text x="1863.0" y="1273.1" font-size="43" text-anchor="end" textLength="59" lengthAdjust="spacingAndGlyphs">750</text>
<path d="M1871.1,1857.5H1882.1M1871.1,1657.7H1882.1M1871.1,1457.9H1882.1M1871.1,1258.1H1882.1" stroke="#cccccc" stroke-width="3.6" fill="none"/>
<text x="2594" y="1992" font-size="48" text-anchor="middle" textLength="62" lengthAdjust="spacingAndGlyphs">age</text>
<text transform="translate(1779,1516) rotate(-90)" font-size="48" text-anchor="middle" textLength="98" lengthAdjust="spacingAndGlyphs">count</text>
<text x="2196.4" y="978.5" font-size="44" textLength="45" lengthAdjust="spacingAndGlyphs">fill</text>
<rect x="2266.5" y="932.5" width="63.9" height="63.2" fill="#e69f00" stroke="#050505" stroke-width="4.4"/>
<rect x="2656.2" y="932.5" width="63.2" height="63.2" fill="#009e73" stroke="#050505" stroke-width="4.4"/>
<text x="2355.6" y="976" font-size="37" textLength="278.3" lengthAdjust="spacingAndGlyphs">all people surveyed</text>
<text x="2746" y="976" font-size="37" textLength="248.4" lengthAdjust="spacingAndGlyphs">highlighted group</text>
</svg>
</div>
<!-- ===== environment pane ===== -->
<div class="pane" style="left:16px;top:1576.3px;width:1686px;height:453.2px;">
  <div class="tabrow" style="left:4px;top:3.7px;width:1678px;height:64.7px;"></div>
  <div class="tab" style="left:260px;top:3.7px;width:162px;height:64.7px;"></div>
  <div class="tab" style="left:428px;top:3.7px;width:248px;height:64.7px;"></div>
  <div class="tab" style="left:682px;top:3.7px;width:94px;height:64.7px;"></div>
  <div class="tab" style="left:782px;top:3.7px;width:175px;height:64.7px;"></div>
  <div style="left:254px;top:3.7px;width:6px;height:64.7px;background:#0b1f33"></div>
  <div style="left:422px;top:3.7px;width:6px;height:64.7px;background:#0b1f33"></div>
  <div style="left:676px;top:3.7px;width:6px;height:64.7px;background:#0b1f33"></div>
  <div style="left:776px;top:3.7px;width:6px;height:64.7px;background:#0b1f33"></div>
  <div style="left:957px;top:3.7px;width:4px;height:64.7px;background:#0b1f33;border-radius:0 7px 0 0"></div>
  <div class="tb" style="left:4px;top:71.9px;width:1678px;height:61.8px;"></div>
  <div class="tab act" style="left:4px;top:3.7px;width:250px;height:70px;"></div>
  <div class="tb" style="left:4px;top:138.4px;width:1678px;height:66.9px;"></div>
  <!-- Data header -->
  <div class="tb" style="left:4px;top:209.2px;width:1678px;height:66.1px;"></div>
  <div class="ed" style="left:4px;top:277.7px;width:477.5px;height:65.8px;"></div>
  <div class="ed" style="left:483.8px;top:277.7px;width:1198.2px;height:65.8px;"></div>
  <div class="tb" style="left:4px;top:345.7px;width:1678px;height:65.4px;"></div>
  <div class="ed" style="left:4px;top:413.4px;width:477.5px;height:36px;"></div>
  <div class="ed" style="left:483.8px;top:413.4px;width:1198.2px;height:36px;"></div>
</div>
<!-- ===== icons overlay ===== -->
<svg style="left:0;top:0" width="3348" height="2048" viewBox="0 0 3348 2048">
<defs>
<linearGradient id="sg" x1="0" y1="0" x2="0" y2="1"><stop offset="0" stop-color="#000" stop-opacity="0"/><stop offset=".2" stop-color="#000"/><stop offset=".8" stop-color="#000"/><stop offset="1" stop-color="#000" stop-opacity="0"/></linearGradient>
<linearGradient id="sl" x1="0" y1="0" x2="0" y2="1"><stop offset="0" stop-color="#8090a0" stop-opacity="0"/><stop offset=".3" stop-color="#8090a0" stop-opacity=".5"/><stop offset=".7" stop-color="#8090a0" stop-opacity=".5"/><stop offset="1" stop-color="#8090a0" stop-opacity="0"/></linearGradient>
<linearGradient id="fg" x1="0" y1="0" x2="0" y2="1"><stop offset="0" stop-color="#f3e19a"/><stop offset="1" stop-color="#d2a93e"/></linearGradient>
<linearGradient id="bg" x1="0" y1="0" x2="1" y2="1"><stop offset="0" stop-color="#e2cc8c"/><stop offset="1" stop-color="#c8a858"/></linearGradient>
<radialGradient id="rmd" cx=".45" cy=".3" r=".8"><stop offset="0" stop-color="#b8406e"/><stop offset="1" stop-color="#8e2448"/></radialGradient>
<radialGradient id="mg" cx=".4" cy=".35" r=".75"><stop offset="0" stop-color="#f4f7fb"/><stop offset="1" stop-color="#a9c3e6"/></radialGradient>
<linearGradient id="pp" x1="0" y1="0" x2="0" y2="1"><stop offset="0" stop-color="#eadfbd"/><stop offset="1" stop-color="#d6c596"/></linearGradient>
<linearGradient id="ab" x1="0" y1="0" x2="1" y2="0"><stop offset="0" stop-color="#b2cfe6"/><stop offset="1" stop-color="#8fb2d0"/></linearGradient>
<linearGradient id="sky" x1="0" y1="0" x2="0" y2="1"><stop offset="0" stop-color="#3a8ee0"/><stop offset=".45" stop-color="#7cc4ee"/><stop offset=".5" stop-color="#e8d060"/><stop offset="1" stop-color="#e0a820"/></linearGradient>
</defs>
<rect x="25.6" y="59.3" width="35.8" height="38.2" fill="#e8e8e8"/>
<circle cx="25.2" cy="70.7" r="15.3" fill="#119c59"/>
<path d="M14.5,70.7h21.6M25.4,60.3v21" stroke="#f2f2f2" stroke-width="6.6"/>
<path d="M83.2,76.0h15.5l-7.8,8.6z" fill="#d6d6d6"/>
<rect x="109.1" y="49.0" width="3.4" height="53.0" fill="url(#sg)"/>
<rect x="112.7" y="53.0" width="1.5" height="45.0" fill="url(#sl)"/>
<path d="M167.5,59.7l21.7,9.5v24.5l-21.7,10.3l-21.7,-10.3v-24.5z" fill="#5ca9c6" fill-opacity=".55" stroke="#3aa3c2" stroke-width="1.4"/>
<path d="M145.8,69.2l21.7,9.3l21.7,-9.3M167.5,78.5v25.5" stroke="#3aa3c2" stroke-width="1.1" fill="none" opacity=".8"/>
<text x="168" y="92" font-family="Liberation Serif, serif" font-size="30" text-anchor="middle" fill="#1d4fa3">R</text>
<circle cx="146.9" cy="70.7" r="15" fill="#1ba77d"/>
<path d="M136.4,70.7h21M146.9,60.2v21" stroke="#f2f2f2" stroke-width="6.6"/>
<rect x="203.7" y="49.0" width="3.4" height="53.0" fill="url(#sg)"/>
<rect x="207.3" y="53.0" width="1.5" height="45.0" fill="url(#sl)"/>
<g transform="translate(226.7,60.3)">
<path d="M5,30V6l4,-5h14l4,4h12v25z" fill="#c9a23a"/>
<path d="M8,30V4h12l4,4h13v22z" fill="#dcdedc"/>
<path d="M0,17.5h32.5l10.3,18.5h-33.5z" fill="url(#fg)" stroke="#b98f24" stroke-width="1.3"/>
<path d="M27,15c4,-8 12,-11 20.5,-10.5v-5.5l11.5,10.5l-11.5,10.5v-6c-8,-0.8 -15,1 -20.5,7z" fill="#1fa37a"/>
</g>
<path d="M297.5,74.4h16.0l-8.0,8.4z" fill="#d6d6d6"/>
<rect x="325.6" y="49.0" width="3.4" height="53.0" fill="url(#sg)"/>
<rect x="329.2" y="53.0" width="1.5" height="45.0" fill="url(#sl)"/>
<rect x="358.0" y="60.0" width="36.6" height="36.6" rx="2" fill="#6a9bd0" stroke="#8bb5e0" stroke-width="1.2"/>
<rect x="363.0" y="60.6" width="27.4" height="16.4" fill="#e9e9e9"/>
<rect x="366.5" y="83.5" width="19.2" height="13.1" fill="#e9e9e9"/>
<rect x="370.0" y="87.0" width="5.2" height="9.6" fill="#6a9bd0"/>
<rect x="440.0" y="57.0" width="31.6" height="31.6" rx="2" fill="#68b6dc" stroke="#8fd0ea" stroke-width="1.2"/>
<rect x="444.3" y="57.6" width="23.7" height="14.2" fill="#e9e9e9"/>
<rect x="447.3" y="77.3" width="16.6" height="11.3" fill="#e9e9e9"/>
<rect x="450.4" y="80.3" width="4.5" height="8.3" fill="#68b6dc"/>
<rect x="427.3" y="63.9" width="32.2" height="32.2" rx="2" fill="#6a9bd0" stroke="#8bb5e0" stroke-width="1.2"/>
<rect x="431.7" y="64.5" width="24.1" height="14.4" fill="#e9e9e9"/>
<rect x="434.8" y="84.6" width="16.9" height="11.5" fill="#e9e9e9"/>
<rect x="437.9" y="87.7" width="4.6" height="8.4" fill="#6a9bd0"/>
<rect x="491.7" y="49.0" width="3.4" height="53.0" fill="url(#sg)"/>
<rect x="495.3" y="53.0" width="1.5" height="45.0" fill="url(#sl)"/>
<rect x="531.6" y="54" width="25.2" height="22" fill="url(#pp)"/>
<rect x="522.4" y="71" width="42.9" height="19" rx="5" fill="#d3d9e3"/>
<rect x="524" y="72.5" width="39.7" height="4" rx="2" fill="#eef1f5"/>
<rect x="527" y="88.2" width="34" height="6.6" rx="1.5" fill="#e4e8ee"/>
<rect x="585.8" y="49.0" width="3.4" height="53.0" fill="url(#sg)"/>
<rect x="589.4" y="53.0" width="1.5" height="45.0" fill="url(#sl)"/>
<rect x="610.3" y="52.2" width="437.5" height="49.2" rx="8" fill="#6f7d88" stroke="#2b4052" stroke-width="4"/>
<path transform="translate(633.0,59.0) scale(1.000)" d="M0.5,37.5C1.5,20 12,11 22.5,10.5V0.5L39,19.5L22.5,38V28.5C13.5,27.5 6,30.5 0.5,37.5z" fill="#9aa3b3"/>
<rect x="1073.6" y="49.0" width="3.4" height="53.0" fill="url(#sg)"/>
<rect x="1077.2" y="53.0" width="1.5" height="45.0" fill="url(#sl)"/>
<path d="M1114,61.2h24M1126,52.8v16.6" stroke="#3cab3e" stroke-width="5.2"/>
<rect x="1114" y="70.7" width="24" height="4.9" fill="#c23b2e"/>
<path d="M1131.5,82.6A9.3,9.3 0 1 1 1118.5,84.2" fill="none" stroke="#8393a3" stroke-width="5.2"/>
<path d="M1114,79.5h11v11z" fill="#8393a3"/>
<path d="M1171.3,75.8h15.0l-7.5,8.4z" fill="#d6d6d6"/>
<rect x="1197.5" y="49.0" width="3.4" height="53.0" fill="url(#sg)"/>
<rect x="1201.1" y="53.0" width="1.5" height="45.0" fill="url(#sl)"/>
<rect x="1226.5" y="55.7" width="44.5" height="40.5" rx="4" fill="#8c959d"/>
<rect x="1231.0" y="60.4" width="16" height="13" rx="1.5" fill="#b3b9be" stroke="#a0a7ad" stroke-width="1"/>
<rect x="1231.0" y="78.6" width="16" height="13" rx="1.5" fill="#b3b9be" stroke="#a0a7ad" stroke-width="1"/>
<rect x="1250.6" y="60.4" width="16" height="13" rx="1.5" fill="#b3b9be" stroke="#a0a7ad" stroke-width="1"/>
<rect x="1250.6" y="78.6" width="16" height="13" rx="1.5" fill="#b3b9be" stroke="#a0a7ad" stroke-width="1"/>
<path d="M1295.5,75.8h15.0l-7.5,8.4z" fill="#d6d6d6"/>
<path d="M1471.2,76.0h15.5l-7.8,8.4z" fill="#d6d6d6"/>
<path d="M3177.4,55.7l21.8,10.8v22.5l-21.8,10.7l-21.8,-10.7v-22.5z" fill="#8fc1d6" stroke="#45aac4" stroke-width="1.4"/>
<path d="M3155.6,66.5l21.8,10l21.8,-10M3177.4,55.7v44" stroke="#45aac4" stroke-width="1.1" fill="none" opacity=".85"/>
<path d="M3155.6,89l21.8,-9l21.8,9" stroke="#45aac4" stroke-width="1" fill="none" opacity=".6"/>
<text x="3177" y="85" font-family="Liberation Serif, serif" font-size="29" text-anchor="middle" fill="#2457a8">R</text>
<path d="M3313.6,76.0h15.5l-7.8,8.4z" fill="#d6d6d6"/>
<path d="M51.0,145.2h25l12,12v30.5h-37z" fill="#e7e7e7" stroke="#8d8d8d" stroke-width="1"/>
<path d="M76.0,145.2v12h12z" fill="#d2d2d2" stroke="#9a9a9a" stroke-width="1"/>
<circle cx="58.8" cy="164.5" r="15" fill="url(#rmd)"/>
<text x="58.8" y="169.4" font-family="Liberation Sans, sans-serif" font-weight="bold" font-size="14" text-anchor="middle" fill="#f4e6ec" textLength="24" lengthAdjust="spacingAndGlyphs">Rmd</text>
<path d="M362.9,145.2h25l12,12v30.5h-37z" fill="#e7e7e7" stroke="#8d8d8d" stroke-width="1"/>
<path d="M387.9,145.2v12h12z" fill="#d2d2d2" stroke="#9a9a9a" stroke-width="1"/>
<circle cx="370.7" cy="164.5" r="15" fill="url(#rmd)"/>
<text x="370.7" y="169.4" font-family="Liberation Sans, sans-serif" font-weight="bold" font-size="14" text-anchor="middle" fill="#f4e6ec" textLength="24" lengthAdjust="spacingAndGlyphs">Rmd</text>
<path d="M685.0,145.3h25l12,12v30.5h-37z" fill="#e7e7e7" stroke="#8d8d8d" stroke-width="1"/>
<path d="M710.0,145.3v12h12z" fill="#d2d2d2" stroke="#9a9a9a" stroke-width="1"/>
<circle cx="690.4" cy="164.1" r="12.8" fill="#4a74ad"/>
<text x="690.6" y="170.9" font-family="Liberation Sans, sans-serif" font-weight="bold" font-size="19" text-anchor="middle" fill="#ffffff">R</text>
<path d="M1005.4,145.3h25l12,12v30.5h-37z" fill="#e7e7e7" stroke="#8d8d8d" stroke-width="1"/>
<path d="M1030.4,145.3v12h12z" fill="#d2d2d2" stroke="#9a9a9a" stroke-width="1"/>
<circle cx="1010.8" cy="164.1" r="12.8" fill="#4a74ad"/>
<text x="1011.0" y="170.9" font-family="Liberation Sans, sans-serif" font-weight="bold" font-size="19" text-anchor="middle" fill="#ffffff">R</text>
<path d="M279.2,160.0l20,20m0,-20l-20,20" stroke="#5b646d" stroke-width="6.6" fill="none"/>
<path d="M601.3,160.0l20,20m0,-20l-20,20" stroke="#5b646d" stroke-width="6.6" fill="none"/>
<path d="M921.0,160.0l20,20m0,-20l-20,20" stroke="#5b646d" stroke-width="6.6" fill="none"/>
<path d="M1233.0,160.0l20,20m0,-20l-20,20" stroke="#69737d" stroke-width="6.6" fill="none"/>
<path fill-rule="evenodd" d="M1575.8,193.0V181.0q0,-6 6,-6h30q6,0 6,6V193.0zM1578.8,190.0h36v-5.5h-36z" fill="#8a949c"/>
<path fill-rule="evenodd" d="M1630.3,193.0V163.0q0,-6 6,-6h30q6,0 6,6V193.0zM1633.3,190.0h36v-23.5h-36z" fill="#8a949c"/>
<path d="M48.6,238.2l20.0,-17.5v8.2h20.9v18.6h-20.9v8.2z" fill="#dddddd"/>
<path d="M141.5,238.2l-20.0,-17.5v8.2h-20.9v18.6h20.9v8.2z" fill="#7b8893"/>
<rect x="163.3" y="209.0" width="3.4" height="57.0" fill="url(#sg)"/>
<rect x="166.9" y="213.0" width="1.5" height="49.0" fill="url(#sl)"/>
<rect x="203.7" y="221.6" width="30.7" height="30.7" rx="3" fill="#e4e4e4"/>
<path d="M203.7,230v-5.4q0,-3 3,-3h24.7q3,0 3,3v5.4z" fill="#c3dbec"/>
<path d="M193,252.6l-2.6,-2.6l11,-11l-5,-5h14v14l-5,-5z" fill="#d0d4d8" stroke="#50606c" stroke-width="1"/>
<rect x="257.7" y="209.0" width="3.4" height="57.0" fill="url(#sg)"/>
<rect x="261.3" y="213.0" width="1.5" height="49.0" fill="url(#sl)"/>
<rect x="290.6" y="219.9" width="35.8" height="35.8" rx="2" fill="#6a9bd0" stroke="#8bb5e0" stroke-width="1.2"/>
<rect x="295.5" y="220.5" width="26.8" height="16.0" fill="#e9e9e9"/>
<rect x="298.9" y="242.9" width="18.8" height="12.8" fill="#e9e9e9"/>
<rect x="302.3" y="246.3" width="5.1" height="9.4" fill="#6a9bd0"/>
<rect x="362.5" y="218.5" width="35.2" height="35.2" rx="7" fill="#d3dae0" stroke="#2b3e50" stroke-width="4"/>
<rect x="677.5" y="209.0" width="3.4" height="57.0" fill="url(#sg)"/>
<rect x="681.1" y="213.0" width="1.5" height="49.0" fill="url(#sl)"/>
<path d="M732,238.5l16,15" stroke="#9a5c24" stroke-width="6.4" stroke-linecap="round"/>
<path d="M746.5,252.4l2,1.8" stroke="#5aa0d8" stroke-width="6" stroke-linecap="round"/>
<circle cx="723.8" cy="230" r="12.6" fill="url(#mg)" stroke="#bcd0ea" stroke-width="2"/>
<path d="M781,253.3l31,-28" stroke="#3c3c3e" stroke-width="6.4"/>
<path d="M779.5,254.6l4.5,-4M807.5,229.3l5,-4.6" stroke="#4e96cc" stroke-width="6.6"/>
<path d="M800.5,213l6,4.3M812.1,210.4l.7,5.2M795.4,220.7l7.6,1.7M819,216l5,-3M821,225h9M820,231l6,6.5M813.3,234.3l2.6,5.1" stroke="#e8854c" stroke-width="2.3" fill="none"/>
<path d="M845.7,235.9h16.0l-8.0,8.2z" fill="#d6d6d6"/>
<rect x="873.7" y="209.0" width="3.4" height="57.0" fill="url(#sg)"/>
<rect x="877.3" y="213.0" width="1.5" height="49.0" fill="url(#sl)"/>
<rect x="908" y="217" width="37.3" height="37" rx="3" fill="#e9ebee"/>
<path d="M912,222.5h32M912,227.0h32M912,231.5h32M912,236.0h32M912,240.5h32M912,245.0h32M912,249.5h32" stroke="#b5c9de" stroke-width="1.3" fill="none"/>
<path d="M917.6,217v37" stroke="#e08a8a" stroke-width="1.2"/>
<path d="M906.5,220v31" stroke="#6c7680" stroke-width="4" stroke-dasharray="2.6,2.2"/>
<rect x="1098.7" y="218" width="32.3" height="35" rx="5" fill="#e6e6e6"/>
<rect x="1103" y="231" width="19.5" height="9" fill="#a8c4e8"/>
<path d="M1126,231h13v-8.6l14.8,13.1l-14.8,13.1v-8.6h-13z" fill="#1e9b50"/>
<rect x="1251.8" y="209.0" width="3.4" height="57.0" fill="url(#sg)"/>
<rect x="1255.4" y="213.0" width="1.5" height="49.0" fill="url(#sl)"/>
<rect x="1278.9" y="217.6" width="32.3" height="35.4" rx="5" fill="#e6e6e6"/>
<path d="M1292,242.5c7,-1 9,-5 8,-9c-1,-4 -6,-5 -9,-4.5" fill="none" stroke="#1a5cd8" stroke-width="3.6"/>
<path d="M1283,229l10,-7.5v15z" fill="#1a5cd8"/>
<path d="M1305.5,231.2h14.5v-9l13.8,13.3l-13.8,13.3v-9h-14.5z" fill="#1e9b50"/>
<rect x="1345.7" y="209.0" width="3.4" height="57.0" fill="url(#sg)"/>
<rect x="1349.3" y="213.0" width="1.5" height="49.0" fill="url(#sl)"/>
<path d="M1372.6,218l31.9,1v33l-31.9,1z" fill="#e5e5e5"/>
<path d="M1395,231h18v-7.4l13.2,11.8l-13.2,11.8v-7.4h-18z" fill="#7ba7cf"/>
<path d="M1571.0,234.2h15.5l-7.8,8.4z" fill="#d6d6d6"/>
<rect x="1599.6" y="209.0" width="3.4" height="57.0" fill="url(#sg)"/>
<rect x="1603.2" y="213.0" width="1.5" height="49.0" fill="url(#sl)"/>
<rect x="1634.3" y="220.2" width="23" height="2.9" fill="#9b9b9b"/>
<rect x="1642.8" y="226.2" width="23" height="2.9" fill="#9b9b9b"/>
<rect x="1642.8" y="232.2" width="23" height="2.9" fill="#9b9b9b"/>
<rect x="1634.3" y="238.2" width="23" height="2.9" fill="#9b9b9b"/>
<rect x="1642.8" y="244.2" width="23" height="2.9" fill="#9b9b9b"/>
<path d="M397.7,1527.2l8.5,-8l8.5,8zM397.7,1533.7l8.5,8l8.5,-8z" fill="#b3aca4"/>
<path d="M1661.5,1527.2l8.5,-8l8.5,8zM1661.5,1533.7l8.5,8l8.5,-8z" fill="#b3aca4"/>
<path d="M2092.4,159.3l20,20m0,-20l-20,20" stroke="#5b646d" stroke-width="6.6" fill="none"/>
<path d="M2256.0,159.3l20,20m0,-20l-20,20" stroke="#5b646d" stroke-width="6.6" fill="none"/>
<path fill-rule="evenodd" d="M3201.9,193.0V181.0q0,-6 6,-6h30q6,0 6,6V193.0zM3204.9,190.0h36v-5.5h-36z" fill="#8a949c"/>
<path fill-rule="evenodd" d="M3256.0,193.0V163.0q0,-6 6,-6h30q6,0 6,6V193.0zM3259.0,190.0h36v-23.5h-36z" fill="#8a949c"/>
<path transform="translate(2319.0,221.0) scale(0.880)" d="M0.5,37.5C1.5,20 12,11 22.5,10.5V0.5L39,19.5L22.5,38V28.5C13.5,27.5 6,30.5 0.5,37.5z" fill="#d3d9df"/>
<g transform="translate(3253.0,211.0)">
<path d="M33,21L52,2" stroke="#8a95a0" stroke-width="4.6" stroke-linecap="round"/>
<path d="M24,22l9,-3l4,5l-2,8l-8,14l-6,-2l-5,1l-5,-2l-11,-2c10,-4 17,-10 24,-19z" fill="#8a95a0"/>
</g>
<path fill-rule="evenodd" d="M3202.0,808.8V796.8q0,-6 6,-6h30q6,0 6,6V808.8zM3205.0,805.8h36v-5.5h-36z" fill="#8a949c"/>
<path fill-rule="evenodd" d="M3256.0,808.8V778.8q0,-6 6,-6h30q6,0 6,6V808.8zM3259.0,805.8h36v-23.5h-36z" fill="#8a949c"/>
<path d="M1750,854.2l20,-17.6v8.3h21.3v18.6h-21.3v8.3z" fill="url(#ab)" stroke="#b9d4e8" stroke-width="1"/>
<path d="M1868.7,854.2l-20.2,-17.6v8.3h-21.0v18.7h21.0v8.3z" fill="#6e8395"/>
<rect x="1887.7" y="823.0" width="3.4" height="55.0" fill="url(#sg)"/>
<rect x="1891.3" y="827.0" width="1.5" height="47.0" fill="url(#sl)"/>
<path d="M1931.5,854.5l-14,14.6" stroke="#9a5c24" stroke-width="6.4" stroke-linecap="round"/>
<circle cx="1942.7" cy="843.2" r="12.2" fill="url(#mg)" stroke="#c5d6ea" stroke-width="1.8"/>
<path d="M1934.2,843.2h17M1942.7,834.7v17" stroke="#18a878" stroke-width="5.6"/>
<rect x="2097.3" y="823.0" width="3.4" height="55.0" fill="url(#sg)"/>
<rect x="2100.9" y="827.0" width="1.5" height="47.0" fill="url(#sl)"/>
<rect x="2130.8" y="832" width="39.6" height="37" fill="#e2e2e2"/>
<rect x="2134" y="835" width="33.4" height="26" fill="url(#sky)"/>
<path d="M2120,846.5h12v-6.5l11,9.6l-11,9.6v-6.5h-12z" fill="#f0f0f0"/>
<path d="M2306.2,850.7h16.0l-8.0,8.2z" fill="#d6d6d6"/>
<rect x="2345.6" y="823.0" width="3.4" height="55.0" fill="url(#sg)"/>
<rect x="2349.2" y="827.0" width="1.5" height="47.0" fill="url(#sl)"/>
<rect x="2383.9" y="835.5" width="34.5" height="37.5" fill="#e5e5e5"/>
<circle cx="2383.3" cy="847" r="15.2" fill="#a5201a"/>
<path d="M2376,839.7l14.6,14.6m0,-14.6l-14.6,14.6" stroke="#f4f4f4" stroke-width="5.8"/>
<rect x="2439.3" y="823.0" width="3.4" height="55.0" fill="url(#sg)"/>
<rect x="2442.9" y="827.0" width="1.5" height="47.0" fill="url(#sl)"/>
<g transform="translate(2463.0,826.0)">
<ellipse cx="28" cy="44" rx="19" ry="2.6" fill="#2e3942" opacity=".55"/>
<path d="M33.5,15L45,1.5" stroke="#c4574a" stroke-width="4.6" stroke-linecap="round"/>
<path d="M24,13c3,-2 7,-1 9,1l3,4c-3,9 -7,18 -11,27c-8,-2 -17,-6 -25,-14c10,-4 18,-10 24,-18z" fill="url(#bg)"/>
<path d="M19.5,19.5l13.5,8M16.5,23.5l14,8.5" stroke="#a8672a" stroke-width="2.4"/>
</g>
<circle cx="3019.4" cy="852.8" r="7.3" fill="#108bd2"/>
<path d="M2996,849.5h9.5a14.6,14.6 0 0 1 23,-9" fill="none" stroke="#108bd2" stroke-width="5.8"/>
<path d="M3043.8,856h-9.5a14.6,14.6 0 0 1 -23,9" fill="none" stroke="#108bd2" stroke-width="5.8"/>
<path d="M3202.0,849.9h16.3l-8.2,8.2z" fill="#d6d6d6"/>
<rect x="3242.1" y="823.0" width="3.4" height="55.0" fill="url(#sg)"/>
<rect x="3245.7" y="827.0" width="1.5" height="47.0" fill="url(#sl)"/>
<g transform="translate(3287.2,850.3)">
<path d="M13.8,-7.9A15.9,15.9 0 1 0 14.7,6.1" fill="none" stroke="#b9c3d1" stroke-width="10.4"/>
<path d="M19.2,-21.8l0.5,19h-19.3z" fill="#b9c3d1"/>
</g>
<path fill-rule="evenodd" d="M1575.9,1637.0V1625.0q0,-6 6,-6h30q6,0 6,6V1637.0zM1578.9,1634.0h36v-5.5h-36z" fill="#8a949c"/>
<path fill-rule="evenodd" d="M1630.0,1637.0V1607.0q0,-6 6,-6h30q6,0 6,6V1637.0zM1633.0,1634.0h36v-23.5h-36z" fill="#8a949c"/>
<g transform="translate(38.7,1664.4)">
<path d="M5,30V6l4,-5h14l4,4h12v25z" fill="#c9a23a"/>
<path d="M8,30V4h12l4,4h13v22z" fill="#dcdedc"/>
<path d="M0,17.5h32.5l10.3,18.5h-33.5z" fill="url(#fg)" stroke="#b98f24" stroke-width="1.3"/>
<path d="M27,15c4,-8 12,-11 20.5,-10.5v-5.5l11.5,10.5l-11.5,10.5v-6c-8,-0.8 -15,1 -20.5,7z" fill="#1fa37a"/>
</g>
<rect x="120.5" y="1664.4" width="35.9" height="35.9" rx="2" fill="#6a9bd0" stroke="#8bb5e0" stroke-width="1.2"/>
<rect x="125.4" y="1665.0" width="26.9" height="16.1" fill="#e9e9e9"/>
<rect x="128.8" y="1687.5" width="18.8" height="12.8" fill="#e9e9e9"/>
<rect x="132.3" y="1690.9" width="5.1" height="9.4" fill="#6a9bd0"/>
<rect x="181.7" y="1651.0" width="3.4" height="55.0" fill="url(#sg)"/>
<rect x="185.3" y="1655.0" width="1.5" height="47.0" fill="url(#sl)"/>
<rect x="207.8" y="1664.4" width="37.1" height="33.4" rx="2.5" fill="#e3e5e8"/>
<rect x="207.8" y="1664.4" width="37.1" height="7" rx="2.5" fill="#c9d0d8"/>
<path d="M207.8,1671.4h37M207.8,1680h37M207.8,1689h37M220,1671.4v26.4M232.5,1671.4v26.4" stroke="#b4bac2" stroke-width="1.3" fill="none"/>
<path d="M228,1685c4,-9 12,-12 20,-11.5v-5.7l14.5,10.7l-14.5,10.7v-6c-8,-1 -15,0 -20,1.8z" fill="#1fa37a"/>
<path d="M529.6,1678.3h16.2l-8.1,8.4z" fill="#d6d6d6"/>
<rect x="570.1" y="1651.0" width="3.4" height="55.0" fill="url(#sg)"/>
<rect x="573.7" y="1655.0" width="1.5" height="47.0" fill="url(#sl)"/>
<g transform="translate(593.0,1654.0)">
<ellipse cx="28" cy="44" rx="19" ry="2.6" fill="#2e3942" opacity=".55"/>
<path d="M33.5,15L45,1.5" stroke="#c4574a" stroke-width="4.6" stroke-linecap="round"/>
<path d="M24,13c3,-2 7,-1 9,1l3,4c-3,9 -7,18 -11,27c-8,-2 -17,-6 -25,-14c10,-4 18,-10 24,-18z" fill="url(#bg)"/>
<path d="M19.5,19.5l13.5,8M16.5,23.5l14,8.5" stroke="#a8672a" stroke-width="2.4"/>
</g>
<rect x="1419" y="1666.4" width="33" height="3" fill="#a9a9a9"/>
<rect x="1419" y="1675.2" width="33" height="3" fill="#a9a9a9"/>
<rect x="1419" y="1684.0" width="33" height="3" fill="#a9a9a9"/>
<rect x="1419" y="1692.8" width="33" height="3" fill="#a9a9a9"/>
<path d="M1547.8,1679.1h16.5l-8.2,8.2z" fill="#d6d6d6"/>
<rect x="1587.8" y="1651.0" width="3.4" height="55.0" fill="url(#sg)"/>
<rect x="1591.4" y="1655.0" width="1.5" height="47.0" fill="url(#sl)"/>
<g transform="translate(1633.6,1678.9)">
<path d="M13.8,-7.9A15.9,15.9 0 1 0 14.7,6.1" fill="none" stroke="#b9c3d1" stroke-width="10.4"/>
<path d="M19.2,-21.8l0.5,19h-19.3z" fill="#b9c3d1"/>
</g>
<path d="M1669.7,1678.7h15.0l-7.5,8.0z" fill="#d6d6d6"/>
<path d="M86.0,1752.3h16.0l-8.0,8.6z" fill="#d6d6d6"/>
<rect x="125.5" y="1719.0" width="3.4" height="52.0" fill="url(#sg)"/>
<rect x="129.1" y="1723.0" width="1.5" height="44.0" fill="url(#sl)"/>
<rect x="163" y="1726" width="27" height="26.6" rx="4" fill="#a968b9"/>
<rect x="172" y="1741" width="27" height="26.8" rx="4" fill="#6090c9"/>
<rect x="154" y="1735" width="26.8" height="26.8" rx="4" fill="#9fb878"/>
<path d="M548.4,1745.8h16.2l-8.1,8.4z" fill="#d6d6d6"/>
<rect x="1310" y="1725.8" width="362" height="49.6" rx="8" fill="#6f7d88" stroke="#2b4052" stroke-width="4"/>
<circle cx="1342.3" cy="1748.6" r="11.6" fill="none" stroke="#b6bdc3" stroke-width="5.8"/>
<path d="M1351,1757.2l13,10.5" stroke="#b6bdc3" stroke-width="7"/>
<circle cx="53" cy="1884.8" r="16.7" fill="#85b7e3" stroke="#3f78ae" stroke-width="1.5"/>
<path d="M49.8,1874.6l10,10.3l-10,10.4z" fill="#ffffff"/>
<path d="M1603.5,1900.8v-29.5q0,-5 5,-5h30.1q5,0 5,5v29.5z" fill="#fbfbfd"/>
<path d="M1603.5,1872v-0.7q0,-5 5,-5h30.1q5,0 5,5v0.7z" fill="#c6eaf6"/>
<path d="M1603.5,1882.5h40.1M1603.5,1891.8h40.1M1612,1872v28.8M1621.3,1872v28.8M1633.3,1872v28.8" stroke="#dde0e7" stroke-width="1.2" fill="none"/>
<path d="M1608.9,2026v-22q0,-2.3 2.3,-2.3h30.4q4,0 4,4.5v4h-4v15.8z" fill="#fafafb"/>
<path d="M1641.6,2001.7v8.5h4v-4q0,-4.5 -4,-4.5z" fill="#dfe3ea"/>
<path d="M1613,2008.5h9M1625,2008.5h9M1613,2014.5h6M1622,2014.5h11M1613,2020.5h7M1622.5,2020.5h11" stroke="#9aa3b8" stroke-width="1.5"/>
</svg>
<!-- ===== text labels ===== -->
<div class="t" style="left:1510.3px;top:-1.5px;font-family:'Liberation Sans',sans-serif;font-size:27px;letter-spacing:0.38px;color:#cbc9c7">talks - gh-pages - RStudio</div>
<div class="t" style="left:695.0px;top:59.2px;font-family:'DejaVu Sans Condensed','Liberation Sans',sans-serif;font-size:32px;letter-spacing:0.72px;color:#d2d2d2">Go to file/function</div>
<div class="t" style="left:1339.4px;top:58.0px;font-family:'DejaVu Sans Condensed','Liberation Sans',sans-serif;font-size:34px;letter-spacing:1.24px;color:#ffffff">Addins</div>
<div class="t" style="left:3215.0px;top:58.0px;font-family:'DejaVu Sans Condensed','Liberation Sans',sans-serif;font-size:34px;letter-spacing:0.38px;color:#ffffff">talks</div>
<div class="t" style="left:102.3px;top:148.0px;font-family:'DejaVu Sans Condensed','Liberation Sans',sans-serif;font-size:34px;letter-spacing:0.72px;color:#a3b8e3">Untitled1*</div>
<div class="t" style="left:413.2px;top:148.0px;font-family:'DejaVu Sans Condensed','Liberation Sans',sans-serif;font-size:34px;letter-spacing:1.19px;color:#ffffff">index.Rmd</div>
<div class="t" style="left:736.5px;top:148.0px;font-family:'DejaVu Sans Condensed','Liberation Sans',sans-serif;font-size:34px;letter-spacing:0.30px;color:#ffffff">thematic.R</div>
<div class="t" style="left:1055.8px;top:148.0px;font-family:'DejaVu Sans Condensed','Liberation Sans',sans-serif;font-size:34px;letter-spacing:0.80px;color:#a3b8e3">Untitled2*</div>
<div class="t" style="left:407.8px;top:216.5px;font-family:'DejaVu Sans Condensed','Liberation Sans',sans-serif;font-size:34px;letter-spacing:0.30px;color:#ffffff">Source on Save</div>
<div class="t" style="left:1158.8px;top:216.5px;font-family:'DejaVu Sans Condensed','Liberation Sans',sans-serif;font-size:34px;letter-spacing:1.50px;color:#ffffff">Run</div>
<div class="t" style="left:1432.3px;top:216.5px;font-family:'DejaVu Sans Condensed','Liberation Sans',sans-serif;font-size:34px;letter-spacing:0.46px;color:#ffffff">Source</div>
<div class="t" style="left:55.4px;top:1510.0px;font-family:'DejaVu Sans Condensed','Liberation Sans',sans-serif;font-size:34px;letter-spacing:1.23px;color:#ffffff">15:33</div>
<div class="t" style="left:204.6px;top:1510.0px;font-family:'DejaVu Sans Condensed','Liberation Sans',sans-serif;font-size:34px;letter-spacing:1.24px;color:#ffffff">(Top Level)</div>
<div class="t" style="left:1520.0px;top:1510.0px;font-family:'DejaVu Sans Condensed','Liberation Sans',sans-serif;font-size:34px;letter-spacing:0.71px;color:#ffffff">R Script</div>
<div class="t" style="left:1750.0px;top:148.0px;font-family:'DejaVu Sans Condensed','Liberation Sans',sans-serif;font-size:34px;letter-spacing:1.33px;color:#ffffff">Console</div>
<div class="t" style="left:1936.2px;top:148.0px;font-family:'DejaVu Sans Condensed','Liberation Sans',sans-serif;font-size:34px;letter-spacing:1.50px;color:#ffffff">Terminal</div>
<div class="t" style="left:2170.4px;top:148.0px;font-family:'DejaVu Sans Condensed','Liberation Sans',sans-serif;font-size:34px;letter-spacing:1.50px;color:#ffffff">Jobs</div>
<div class="t" style="left:1760.3px;top:216.2px;font-family:'DejaVu Sans Condensed','Liberation Sans',sans-serif;font-size:34px;letter-spacing:1.84px;color:#ffffff">~/github/talks/20200605/demo/</div>
<div class="t" style="left:1749.2px;top:762.0px;font-family:'DejaVu Sans Condensed','Liberation Sans',sans-serif;font-size:34px;letter-spacing:1.30px;color:#ffffff">Files</div>
<div class="t" style="left:1874.3px;top:762.0px;font-family:'DejaVu Sans Condensed','Liberation Sans',sans-serif;font-size:34px;letter-spacing:1.30px;color:#ffffff">Plots</div>
<div class="t" style="left:2006.7px;top:762.0px;font-family:'DejaVu Sans Condensed','Liberation Sans',sans-serif;font-size:34px;letter-spacing:0.83px;color:#ffffff">Packages</div>
<div class="t" style="left:2209.8px;top:762.0px;font-family:'DejaVu Sans Condensed','Liberation Sans',sans-serif;font-size:34px;letter-spacing:1.50px;color:#ffffff">Help</div>
<div class="t" style="left:2339.5px;top:762.0px;font-family:'DejaVu Sans Condensed','Liberation Sans',sans-serif;font-size:34px;letter-spacing:0.30px;color:#ffffff">Viewer</div>
<div class="t" style="left:1976.2px;top:832.0px;font-family:'DejaVu Sans Condensed','Liberation Sans',sans-serif;font-size:34px;letter-spacing:1.03px;color:#ffffff">Zoom</div>
<div class="t" style="left:2179.6px;top:832.0px;font-family:'DejaVu Sans Condensed','Liberation Sans',sans-serif;font-size:34px;letter-spacing:0.96px;color:#ffffff">Export</div>
<div class="t" style="left:3055.4px;top:832.0px;font-family:'DejaVu Sans Condensed','Liberation Sans',sans-serif;font-size:34px;letter-spacing:1.20px;color:#ffffff">Publish</div>
<div class="t" style="left:42.2px;top:1590.7px;font-family:'DejaVu Sans Condensed','Liberation Sans',sans-serif;font-size:34px;letter-spacing:0.78px;color:#ffffff">Environment</div>
<div class="t" style="left:297.8px;top:1590.7px;font-family:'DejaVu Sans Condensed','Liberation Sans',sans-serif;font-size:34px;letter-spacing:1.35px;color:#ffffff">History</div>
<div class="t" style="left:467.3px;top:1590.7px;font-family:'DejaVu Sans Condensed','Liberation Sans',sans-serif;font-size:34px;letter-spacing:0.92px;color:#ffffff">Connections</div>
<div class="t" style="left:721.0px;top:1590.7px;font-family:'DejaVu Sans Condensed','Liberation Sans',sans-serif;font-size:34px;letter-spacing:1.00px;color:#ffffff">Git</div>
<div class="t" style="left:824.3px;top:1590.7px;font-family:'DejaVu Sans Condensed','Liberation Sans',sans-serif;font-size:34px;letter-spacing:1.50px;color:#ffffff">Tutorial</div>
<div class="t" style="left:268.7px;top:1660.0px;font-family:'DejaVu Sans Condensed','Liberation Sans',sans-serif;font-size:34px;letter-spacing:0.56px;color:#ffffff">Import Dataset</div>
<div class="t" style="left:1468.8px;top:1660.0px;font-family:'DejaVu Sans Condensed','Liberation Sans',sans-serif;font-size:34px;letter-spacing:1.23px;color:#ffffff">List</div>
<div class="t" style="left:44.5px;top:1732.6px;font-family:'DejaVu Sans Condensed','Liberation Sans',sans-serif;font-size:30px;letter-spacing:0.30px;color:#ffffff">R</div>
<div class="t" style="left:212.5px;top:1726.1px;font-family:'DejaVu Sans Condensed','Liberation Sans',sans-serif;font-size:34px;letter-spacing:0.68px;color:#ffffff">Global Environment</div>
<div class="t" style="left:32.7px;top:1799.1px;font-family:'DejaVu Sans Mono','Liberation Mono',monospace;font-size:43px;letter-spacing:1.20px;color:#ffffff">Data</div>
<div class="t" style="left:82.2px;top:1866.7px;font-family:'DejaVu Sans Mono','Liberation Mono',monospace;font-size:43px;letter-spacing:0.73px;color:#cccccc">data_health</div>
<div class="t" style="left:512.4px;top:1866.7px;font-family:'DejaVu Sans Mono','Liberation Mono',monospace;font-size:43px;letter-spacing:0.65px;color:#cccccc">38361 obs. of 2 variables</div>
<div class="t" style="left:33.2px;top:1934.9px;font-family:'DejaVu Sans Mono','Liberation Mono',monospace;font-size:43px;letter-spacing:0.76px;color:#ffffff">Functions</div>
<div style="left:20px;top:1990px;width:1678px;height:35.7px;overflow:hidden">
<div class="t" style="left:60.2px;top:13.7px;font-family:'DejaVu Sans Mono','Liberation Mono',monospace;font-size:43px;letter-spacing:0.60px;color:#cccccc">browseR</div>
<div class="t" style="left:493.5px;top:13.7px;font-family:'DejaVu Sans Mono','Liberation Mono',monospace;font-size:43px;letter-spacing:0.60px;color:#cccccc">function (browser = c("chrome", "firefo</div>
</div>
</div>
</body>
</html>
